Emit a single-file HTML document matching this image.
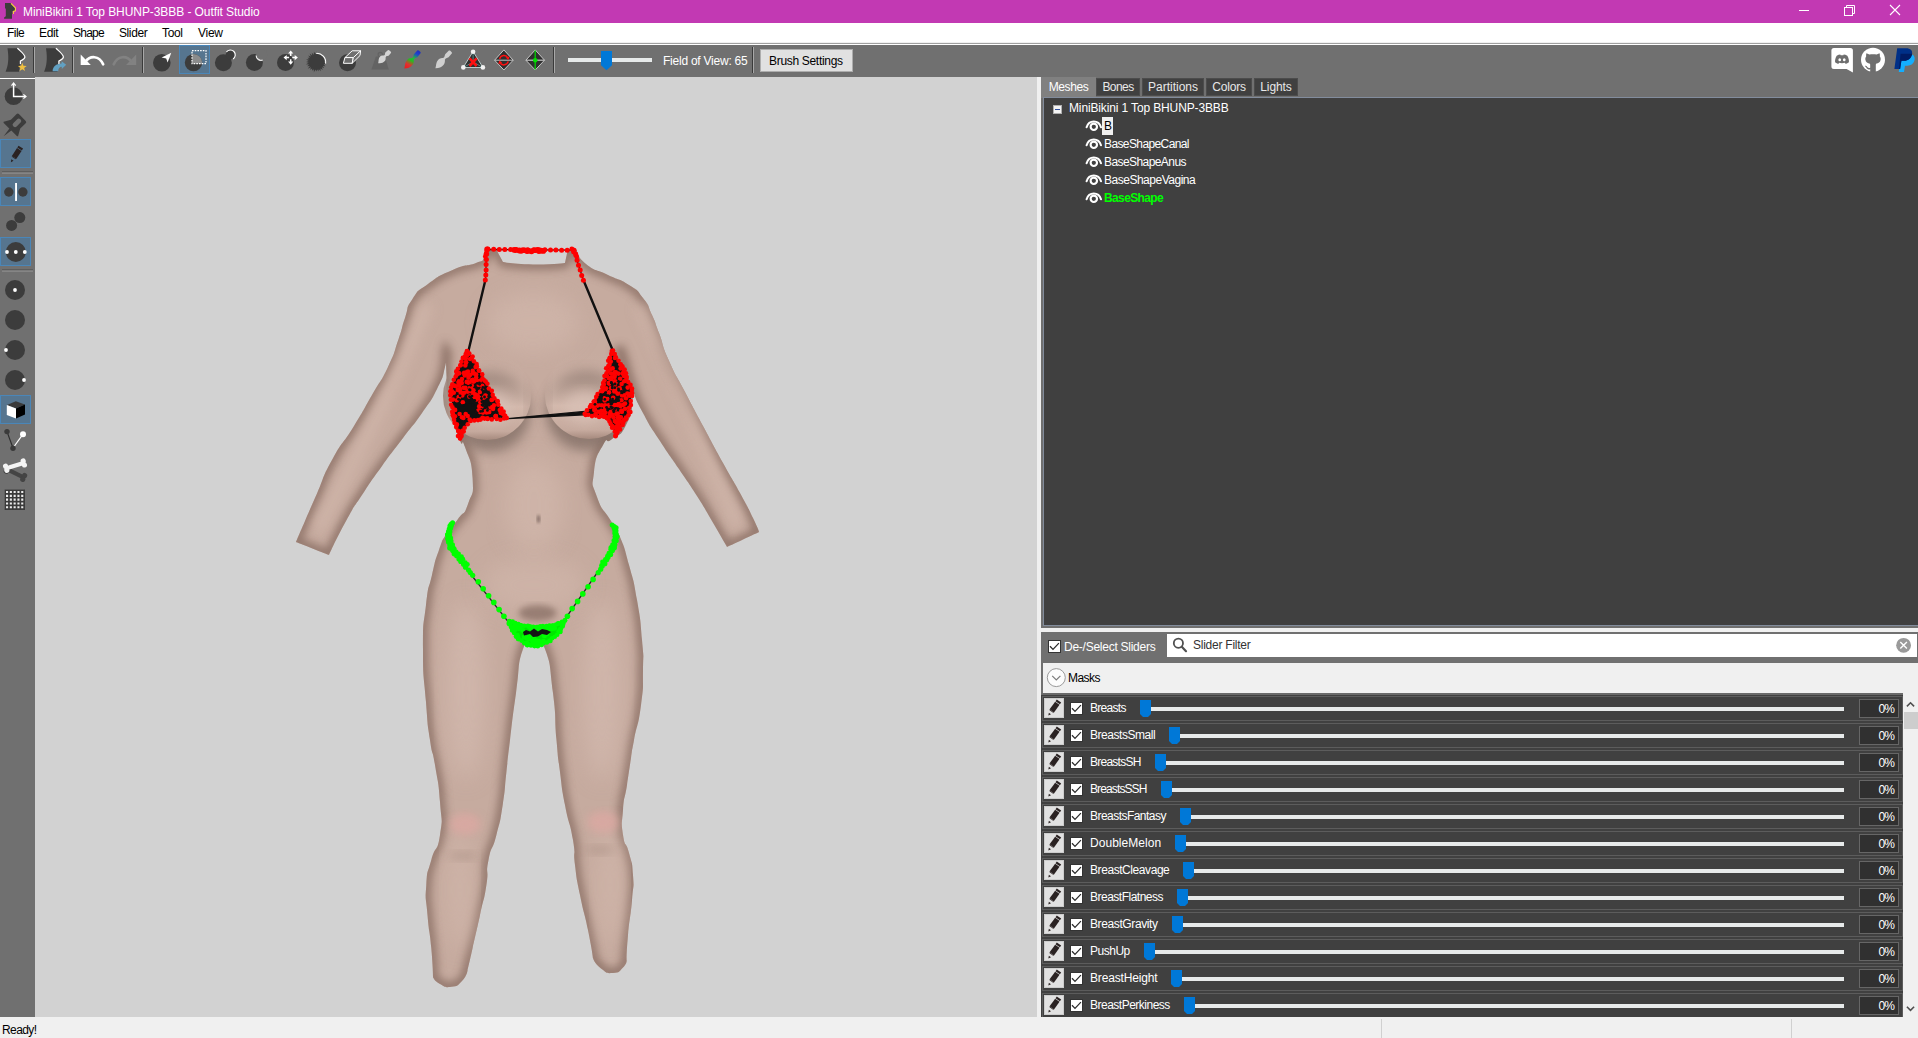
<!DOCTYPE html>
<html lang="en"><head><meta charset="utf-8"><title>MiniBikini 1 Top BHUNP-3BBB - Outfit Studio</title>
<style>
*{box-sizing:border-box;margin:0;padding:0}
html,body{width:1918px;height:1038px;overflow:hidden;background:#f0f0f0}
body{font-family:"Liberation Sans", sans-serif;font-size:12px;color:#000;position:relative;-webkit-font-smoothing:antialiased}
.abs{position:absolute}
.t{position:absolute;white-space:nowrap;line-height:16px;height:16px}
svg{position:absolute;overflow:visible}
#title{left:0;top:0;width:1918px;height:23px;background:#c239b3}
#menu{left:0;top:23px;width:1918px;height:19px;background:#fff}
#menuline{left:0;top:42px;width:1918px;height:3px;background:linear-gradient(#f0f0f0 0,#f0f0f0 33%,#a0a0a0 33%,#a0a0a0 66%,#fff 66%)}
#tool{left:0;top:45px;width:1918px;height:32px;background:#707070}
#left{left:0;top:77px;width:35px;height:940px;background:#707070}
#view{left:35px;top:77px;width:1002px;height:940px;background:#d2d2d2}
#sash{left:1037px;top:77px;width:4px;height:940px;background:#f0f0f0}
#rp{left:1041px;top:77px;width:877px;height:940px;background:#707070}
#status{left:0;top:1017px;width:1918px;height:21px;background:#f0f0f0}
.sel{position:absolute;background:#56758f;border:1px solid #4a86b8}
.vsep{position:absolute;width:2px;background:linear-gradient(90deg,#3c3c3c 50%,#a8a8a8 50%)}
.hsep{position:absolute;height:2px;background:linear-gradient(#505050 50%,#a0a0a0 50%)}
.tab{position:absolute;top:78px;height:18px;background:#404040;color:#e8e8e8;text-align:center;line-height:17px;border:1px solid #4c4c4c}
.tab.on{top:77px;height:21px;background:#808080;color:#fff;border:0;line-height:21px}
.row{position:absolute;left:1042px;width:861px;height:25px;border:1px solid #5c5c5c;background:#404040}
.eb{position:absolute;left:1044px;width:20px;height:20px;background:#e1e1e1;border:1px solid #cdcdcd}
.cb{position:absolute;width:13px;height:13px;background:#fff;border:1px solid #333}
.trk{position:absolute;height:4px;background:#e7eaea}
.val{position:absolute;left:1859px;width:40px;height:19px;background:#303030;border:1px solid #666;color:#fff;text-align:right;padding-right:4px;line-height:19px}
</style></head>
<body>
<div id="title" class="abs"></div>
<div id="menu" class="abs"></div><div id="menuline" class="abs"></div>
<div id="tool" class="abs"></div>
<div id="view" class="abs"></div>
<div id="left" class="abs"></div>
<div id="sash" class="abs"></div>
<div id="rp" class="abs"></div>
<svg style="left:3px;top:1px" width="16" height="20" viewBox="3 1 16 20" ><path d="M5 3 H10.9 L15 7.4 V11 H12.6 V14 H12 V18.8 H4.1 V17.6 L5.8 16.2 V8.6 H5 Z" fill="#3c3c3c"/><path d="M11 3.3 L15.4 7.8 V10.8 L13.4 11.4 V13.9" fill="none" stroke="#f8d040" stroke-width="1.1"/></svg>
<div class="t" style="left:23px;top:4px;color:#fff;letter-spacing:-0.076px;">MiniBikini 1 Top BHUNP-3BBB - Outfit Studio</div>
<svg style="left:1790px;top:0px" width="128" height="23" viewBox="1790 0 128 23" ><path d="M1799 10.5 H1809" stroke="#fff" stroke-width="1"/><rect x="1844.5" y="7.5" width="8" height="8" fill="none" stroke="#fff" stroke-width="1"/><path d="M1846.5 7.5 V5.5 H1854.5 V13.5 H1852.5" fill="none" stroke="#fff" stroke-width="1"/><path d="M1890 5 L1900 15 M1900 5 L1890 15" stroke="#fff" stroke-width="1.1"/></svg>
<div class="t" style="left:7px;top:25px;letter-spacing:-0.548px;">File</div>
<div class="t" style="left:39px;top:25px;letter-spacing:-0.329px;">Edit</div>
<div class="t" style="left:73px;top:25px;letter-spacing:-0.751px;">Shape</div>
<div class="t" style="left:119px;top:25px;letter-spacing:-0.398px;">Slider</div>
<div class="t" style="left:162px;top:25px;letter-spacing:-0.339px;">Tool</div>
<div class="t" style="left:198px;top:25px;letter-spacing:-0.266px;">View</div>
<svg style="left:0px;top:45px" width="760" height="32" viewBox="0 45 760 32" ><path transform="translate(0 0)" d="M7.5 48.2 L17.4 48.2 C19.5 50.5 24.9 54 24.9 57.1 C24.9 59.5 21.5 60.2 20.2 61 L20.2 64.5 L19 71.7 L5.6 71.7 C8 66 9.2 59 7.5 48.2 Z" fill="#3c3c3c"/><path transform="translate(0 0)" d="M17.4 48.2 C19.5 50.5 24.9 54 24.9 57.1 C24.9 59.5 21.5 60.2 20.4 61 L20.4 64" fill="none" stroke="#fff" stroke-width="1.2"/><polygon points="22.30,62.80 23.44,65.84 26.67,65.98 24.14,68.00 25.00,71.12 22.30,69.33 19.60,71.12 20.46,68.00 17.93,65.98 21.16,65.84" fill="#f0c040"/><rect x="33" y="47" width="1" height="26" fill="#3a3a3a"/><rect x="34" y="47" width="1" height="26" fill="#a8a8a8"/><path transform="translate(38.5 0)" d="M7.5 48.2 L17.4 48.2 C19.5 50.5 24.9 54 24.9 57.1 C24.9 59.5 21.5 60.2 20.2 61 L20.2 64.5 L19 71.7 L5.6 71.7 C8 66 9.2 59 7.5 48.2 Z" fill="#3c3c3c"/><path transform="translate(38.5 0)" d="M17.4 48.2 C19.5 50.5 24.9 54 24.9 57.1 C24.9 59.5 21.5 60.2 20.4 61 L20.4 64" fill="none" stroke="#fff" stroke-width="1.2"/><path d="M52.6 71.2 C52.8 66.5 56 63.6 61.6 63.4 L61.6 61.2 L66.2 64.8 L61.8 69 L61.8 66.8 C59.5 66.9 58.3 68.5 58.2 71.2 Z" fill="#62a1c3"/><rect x="72" y="47" width="1" height="26" fill="#3a3a3a"/><rect x="73" y="47" width="1" height="26" fill="#a8a8a8"/><path d="M80.7 54.6 L80.7 64.9 L90.8 64.9 Z" fill="#fff"/><path d="M85.5 61.5 C90 55.5 99 55 103.2 64.4" fill="none" stroke="#fff" stroke-width="2.6" stroke-linecap="round"/><path d="M136.2 54.6 L136.2 64.9 L126.1 64.9 Z" fill="#828282"/><path d="M131.4 61.5 C126.9 55.5 117.9 55 113.7 64.4" fill="none" stroke="#828282" stroke-width="2.6" stroke-linecap="round"/><rect x="142" y="47" width="1" height="26" fill="#3a3a3a"/><rect x="143" y="47" width="1" height="26" fill="#a8a8a8"/><circle cx="161.8" cy="62.8" r="8.8" fill="#3c3c3c"/><path d="M171.3 52.8 L161.6 57.6 L166.2 58.6 L167.6 62.6 Z" fill="#fff"/><rect x="179.5" y="45.5" width="30" height="28" fill="#56758f" stroke="#4a86b8" stroke-width="1"/><circle cx="193.5" cy="62.6" r="8.7" fill="#3c3c3c"/><defs><clipPath id="mk"><circle cx="193.5" cy="62.6" r="8.7"/></clipPath></defs><rect x="192" y="50.7" width="14" height="13" fill="#8c8c8c" clip-path="url(#mk)"/><rect x="192" y="50.7" width="14" height="13" fill="none" stroke="#fff" stroke-width="1.2" stroke-dasharray="1.6 1.1"/><circle cx="223.4" cy="62.8" r="8.5" fill="#3c3c3c"/><circle cx="230.2" cy="54.9" r="4.6" fill="#3c3c3c"/><path d="M226.4 52 A4.9 4.9 0 1 1 233 59" fill="none" stroke="#fff" stroke-width="1.1"/><circle cx="254.4" cy="62.4" r="8.5" fill="#3c3c3c"/><circle cx="261.8" cy="54.6" r="5.6" fill="#707070"/><path d="M256.2 55.6 A5.6 5.6 0 0 0 262.6 60.2 A4.6 4.6 0 0 1 256.2 55.6 Z" fill="#fff" stroke="#fff" stroke-width="0.7"/><circle cx="285.5" cy="62.6" r="8.5" fill="#3c3c3c"/><path d="M285.3 57.6 H289.09999999999997 M292.3 57.6 H296.09999999999997 M290.7 52.2 V56.0 M290.7 59.2 V63.0" stroke="#fff" stroke-width="1.5"/><path d="M290.7 50.4 l-2.6 3.2 h5.2 Z M290.7 64.8 l-2.6 -3.2 h5.2 Z M283.5 57.6 l3.2 -2.6 v5.2 Z M297.9 57.6 l-3.2 -2.6 v5.2 Z" fill="#fff"/><polygon points="324.60,61.90 324.55,62.83 325.96,64.11 323.57,64.44 325.59,66.37 322.82,66.00 324.18,68.19 321.74,67.34 322.78,70.02 320.40,68.42 320.82,71.28 318.84,69.17 318.46,71.34 317.16,69.55 316.30,71.52 315.44,69.55 313.92,72.32 313.76,69.17 311.99,70.85 312.20,68.42 310.12,69.64 310.86,67.34 307.78,68.69 309.78,66.00 307.10,66.33 309.03,64.44 305.88,64.28 308.65,62.76 306.08,61.90 308.65,61.04 306.13,59.58 309.03,59.36 307.47,57.65 309.78,57.80 308.15,55.40 310.86,56.46 309.61,53.51 312.20,55.38 311.84,52.64 313.76,54.63 313.95,51.60 315.44,54.25 316.30,51.43 317.23,53.65 318.15,53.81 319.04,54.07 319.90,54.42 320.72,54.87 321.47,55.41 322.17,56.03 322.79,56.73 323.33,57.48 323.78,58.30 324.13,59.16 324.39,60.05 324.55,60.97" fill="#3c3c3c"/><path d="M316 53.3 A9 9 0 0 1 325.6 63.6" fill="none" stroke="#fff" stroke-width="1.1"/><circle cx="347.5" cy="62.8" r="8.5" fill="#3c3c3c"/><path d="M352.2 50.8 L360.6 50.8 L353.3 57.6 L344.9 57.6 Z" fill="#707070" stroke="#fff" stroke-width="1" stroke-linejoin="round"/><path d="M344.9 57.6 L353.3 57.6 L352.2 63.3 L343.4 63.3 Z" fill="#6c6c6c" stroke="#fff" stroke-width="1" stroke-linejoin="round"/><path d="M360.6 50.8 L360 55.5 L352.2 63.3 L353.3 57.6 Z" fill="#707070" stroke="#fff" stroke-width="1" stroke-linejoin="round"/><circle cx="380.3" cy="54.6" r="2.2" fill="none" stroke="#636363" stroke-width="1.2"/><path d="M375.8 56.6 H384.8 L388.8 69.6 H371.4 Z" fill="#636363"/><path d="M378.20 63.20 C378.79 60.93 378.19 58.47 380.08 56.51 C381.26 55.29 383.15 55.71 383.95 55.53 L384.80 54.94 L385.28 52.57 L388.14 49.91 L389.14 50.17 L390.86 51.83 L391.16 52.83 L388.59 55.77 L386.23 56.33 L385.67 57.20 C385.52 58.00 386.00 59.88 384.82 61.10 C382.93 63.05 381.04 63.59 378.20 63.20 Z" fill="#d4d4d4"/><defs><linearGradient id="gcb" gradientUnits="userSpaceOnUse" x1="408" y1="69" x2="418" y2="51"><stop offset="0" stop-color="#e82020"/><stop offset="0.2" stop-color="#e03030"/><stop offset="0.45" stop-color="#20c020"/><stop offset="0.6" stop-color="#20b840"/><stop offset="0.85" stop-color="#2040d0"/><stop offset="1" stop-color="#2030c0"/></linearGradient></defs><path d="M404.30 68.60 C405.16 65.66 404.58 62.68 407.03 59.89 C408.56 58.15 410.87 58.33 411.97 58.06 L413.04 57.15 L413.89 54.21 L417.56 50.34 L418.70 50.41 L420.50 51.99 L420.72 53.11 L417.35 57.24 L414.54 58.47 L413.77 59.65 C413.65 60.77 414.12 63.04 412.59 64.78 C410.14 67.56 407.78 68.57 404.30 68.60 Z" fill="url(#gcb)"/><path d="M435.40 68.20 C436.31 65.31 435.78 62.33 438.26 59.64 C439.81 57.96 442.10 58.21 443.20 57.98 L444.28 57.11 L445.18 54.21 L448.89 50.48 L450.02 50.59 L451.78 52.21 L451.98 53.33 L448.56 57.33 L445.74 58.46 L444.96 59.61 C444.82 60.72 445.25 62.98 443.70 64.66 C441.22 67.35 438.85 68.28 435.40 68.20 Z" fill="#cfcfcf"/><path d="M473.1 51.5 L463.2 67.5 L483 67.5 Z" fill="#2e2e2e" stroke="#b8c8c8" stroke-width="1"/><path d="M473.1 51.5 L473.1 62 M463.2 67.5 L473.1 62 L483 67.5" stroke="#5a9a9a" stroke-width="0.8" fill="none"/><circle cx="473.1" cy="51.7" r="2.3" fill="#f2f2f2"/><circle cx="463.3" cy="67.4" r="2.3" fill="#f2f2f2"/><circle cx="482.9" cy="67.4" r="2.3" fill="#f2f2f2"/><path d="M469.5 58.4 L476.7 66 M476.7 58.4 L469.5 66" stroke="#ff1010" stroke-width="2.6"/><path d="M503.9 49.9 L513.2 60.2 L503.9 70 L494.6 60.2 Z" fill="#2e2e2e" stroke="#c4c4c4" stroke-width="1"/><path d="M494.6 60.2 H513.2" stroke="#c4c4c4" stroke-width="1"/><path d="M499.6 59 A4.5 4.5 0 0 1 508 58" fill="none" stroke="#ff1010" stroke-width="1.5"/><path d="M508.2 61.4 A4.5 4.5 0 0 1 499.8 62.4" fill="none" stroke="#ff1010" stroke-width="1.5"/><path d="M509.6 56.4 L508.4 60 L505.6 57.6 Z M498.2 64 L499.4 60.4 L502.2 62.8 Z" fill="#ff1010"/><path d="M535.2 49.9 L544.5 60.2 L535.2 70 L525.9 60.2 Z" fill="#2e2e2e" stroke="#c4c4c4" stroke-width="1"/><path d="M525.9 60.2 H544.5" stroke="#c4c4c4" stroke-width="1.2"/><path d="M535.2 50.5 V69.5" stroke="#00d000" stroke-width="1.3"/><circle cx="535.2" cy="60.2" r="2.2" fill="#00e000"/><rect x="553" y="47" width="1" height="26" fill="#3a3a3a"/><rect x="554" y="47" width="1" height="26" fill="#a8a8a8"/><rect x="568" y="58" width="84" height="4" fill="#e7eaea"/><path d="M601 51 H612 V65.2 L606.5 70.2 L601 65.2 Z" fill="#0078d7"/><rect x="752" y="47" width="1" height="26" fill="#3a3a3a"/><rect x="753" y="47" width="1" height="26" fill="#a8a8a8"/></svg>
<div class="t" style="left:663px;top:53px;color:#fff;letter-spacing:-0.237px;">Field of View: 65</div>
<div class="abs" style="left:760px;top:49px;width:93px;height:23px;background:#e1e1e1;border:1px solid #adadad"></div>
<div class="t" style="left:769px;top:53px;letter-spacing:-0.311px;">Brush Settings</div>
<svg style="left:1825px;top:45px" width="93" height="32" viewBox="1825 45 93 32" ><path d="M1833.9 47.9 H1850.4 A2.5 2.5 0 0 1 1852.9 50.4 V72.6 L1846.6 69 H1833.9 A2.5 2.5 0 0 1 1831.4 66.5 V50.4 A2.5 2.5 0 0 1 1833.9 47.9 Z" fill="#fff"/><g transform="translate(1842 59.2) scale(0.9) translate(-1842.1 -59)"><path d="M1836.2 55.2 C1837.6 54.3 1839 53.9 1840.2 53.8 L1840.6 54.6 H1843.6 L1844 53.8 C1845.2 53.9 1846.6 54.3 1848 55.2 C1849.4 57.6 1850 60 1849.8 62.4 C1848.6 63.4 1847.4 63.9 1846.2 64.2 L1845.4 62.9 C1843.4 63.6 1840.8 63.6 1838.8 62.9 L1838 64.2 C1836.8 63.9 1835.6 63.4 1834.4 62.4 C1834.2 60 1834.8 57.6 1836.2 55.2 Z" fill="#6e6e6e"/><ellipse cx="1839.6" cy="59.6" rx="1.5" ry="1.7" fill="#fff"/><ellipse cx="1844.6" cy="59.6" rx="1.5" ry="1.7" fill="#fff"/></g><circle cx="1873" cy="59.7" r="12" fill="#fff"/><path d="M1866.4 53.2 L1869.4 54.6 C1871.6 54 1874.4 54 1876.6 54.6 L1879.6 53.2 C1880 54.4 1880 55.4 1879.8 56.2 C1880.6 57.4 1880.8 58.6 1880.6 59.8 C1880.2 62.4 1878.4 63.4 1876 63.8 C1875.8 64.4 1875.8 65 1875.8 66 L1875.8 72.2 L1870.2 72.2 L1870.2 69.2 C1868 69.8 1866.9 68.8 1866.3 67.6 C1865.9 66.8 1865.4 66.3 1864.8 65.9 C1865.8 65.6 1866.7 66 1867.3 66.9 C1868 67.9 1869 68.2 1870.2 67.8 L1870.2 66 C1870.2 65 1870.2 64.4 1870 63.8 C1867.6 63.4 1865.8 62.4 1865.4 59.8 C1865.2 58.6 1865.4 57.4 1866.2 56.2 C1866 55.4 1866 54.4 1866.4 53.2 Z" fill="#6e6e6e"/><path d="M1900.6 53.8 H1908.8 C1912.8 53.8 1915.2 56 1914.6 59.6 C1913.9 63.8 1911 65.8 1907.2 65.8 H1905 L1904 71.9 H1898.8 Z" fill="#14aeff"/><path d="M1897.2 48.2 H1906.2 C1910.4 48.2 1912.6 50.4 1912.1 53.8 C1911.4 58.6 1908.2 60.8 1904 60.8 H1901.4 L1900.1 69 H1894.4 Z" fill="#003087"/><path d="M1900.6 53.8 H1908.8 C1910.4 53.8 1911.4 53.6 1912.1 53.8 C1911.4 58.6 1908.2 60.8 1904 60.8 H1901.4 L1900.1 69 H1898.9 Z" fill="#001c64"/></svg>
<svg style="left:0px;top:77px" width="35" height="440" viewBox="0 77 35 440" ><rect x="0" y="78" width="35" height="1" fill="#fff"/><circle cx="13.6" cy="96.2" r="8.9" fill="#3c3c3c"/><path d="M13.6 84 V96.5 H25.4" fill="none" stroke="#fff" stroke-width="1.5"/><path d="M11.5 85.6 L13.6 83 L15.7 85.6 M23.4 94.4 L26 96.5 L23.4 98.6" fill="none" stroke="#fff" stroke-width="1.2"/><g transform="translate(22.3 117.5) rotate(45)"><rect x="-6.4" y="0" width="12.8" height="13" rx="1.6" fill="#3c3c3c"/><path d="M-6.4 9.5 L-10.2 16.2 L-9.6 17 H9.6 L10.2 16.2 L6.4 9.5 Z" fill="#3c3c3c"/><path d="M-1.4 16.5 H1.4 L0 26.4 Z" fill="#3c3c3c"/><rect x="-2.4" y="2.6" width="4.8" height="10" rx="2.2" fill="#707070"/></g><rect x="0.5" y="139.5" width="30" height="28" fill="#56758f" stroke="#4a86b8" stroke-width="1"/><g transform="translate(16 154.5) scale(1.0) rotate(33)"><rect x="-2.7" y="-8.8" width="5.4" height="2.2" fill="#2a2222"/><rect x="-2.7" y="-6" width="5.4" height="9.4" fill="#2a2222"/><path d="M-2.7 3.4 H2.7 L2.2 4.2 H-2.2 Z" fill="#2a2222"/><path d="M-1.3 6.6 H1.3 L0 9.3 Z" fill="#2a2222"/></g><rect x="2" y="171.5" width="31" height="1" fill="#4a4a4a"/><rect x="2" y="172.5" width="31" height="1" fill="#9a9a9a"/><rect x="0.5" y="177.5" width="30" height="28" fill="#56758f" stroke="#4a86b8" stroke-width="1"/><circle cx="8.8" cy="192" r="4.7" fill="#3c3c3c"/><circle cx="22.9" cy="192" r="4.7" fill="#3c3c3c"/><rect x="15.1" y="183" width="1.9" height="18" fill="#fff"/><circle cx="11.6" cy="225.4" r="5.5" fill="#3c3c3c"/><circle cx="19.8" cy="217.6" r="5.5" fill="#3c3c3c"/><rect x="0.5" y="237.5" width="30" height="28" fill="#56758f" stroke="#4a86b8" stroke-width="1"/><circle cx="15.8" cy="252" r="10" fill="#3c3c3c"/><circle cx="7" cy="252" r="1.9" fill="#fff"/><circle cx="15.8" cy="252" r="1.9" fill="#fff"/><circle cx="24.8" cy="252" r="1.9" fill="#fff"/><rect x="2" y="269.5" width="31" height="1" fill="#4a4a4a"/><rect x="2" y="270.5" width="31" height="1" fill="#9a9a9a"/><circle cx="15" cy="290" r="10" fill="#3c3c3c"/><circle cx="15" cy="290" r="1.9" fill="#fff"/><circle cx="15" cy="320" r="10" fill="#3c3c3c"/><circle cx="15" cy="350" r="10" fill="#3c3c3c"/><circle cx="6" cy="350" r="1.9" fill="#fff"/><circle cx="15" cy="380" r="10" fill="#3c3c3c"/><circle cx="24" cy="380" r="1.9" fill="#fff"/><rect x="0.5" y="395.5" width="30" height="28" fill="#56758f" stroke="#4a86b8" stroke-width="1"/><path d="M15.8 401.2 L25 404.6 L16 408.4 L6.8 405 Z" fill="#3a3a3a"/><path d="M6.8 405 L16 408.4 L16 418.6 L6.8 415 Z" fill="#fff"/><path d="M16 408.4 L25 404.6 L25 414.4 L16 418.6 Z" fill="#000"/><path d="M7 431.6 L13 448" stroke="#2e2e2e" stroke-width="1.2"/><path d="M13 448 L23 434.2" stroke="#fff" stroke-width="1.2"/><circle cx="7" cy="431.6" r="2.7" fill="#3a3a3a"/><circle cx="13" cy="448.2" r="2.7" fill="#3a3a3a"/><circle cx="23" cy="434.2" r="3" fill="#fff"/><g transform="translate(15.4 473.4) rotate(26)" fill="#444"><rect x="-9.0" y="-2.1" width="18" height="4.2"/><circle cx="-9.2" cy="-2.1" r="2.6"/><circle cx="-9.2" cy="2.1" r="2.6"/><circle cx="9.2" cy="-2.1" r="2.6"/><circle cx="9.2" cy="2.1" r="2.6"/></g><g transform="translate(15 465.6) rotate(-17)" fill="#f4f4f4"><rect x="-9.0" y="-2.1" width="18" height="4.2"/><circle cx="-9.2" cy="-2.1" r="2.6"/><circle cx="-9.2" cy="2.1" r="2.6"/><circle cx="9.2" cy="-2.1" r="2.6"/><circle cx="9.2" cy="2.1" r="2.6"/></g><rect x="4.4" y="489.4" width="20.4" height="20.4" fill="#ececec"/><path d="M5.15 489.3 V510 M4.3 490.15 H25 M8.95 489.3 V510 M4.3 493.95 H25 M12.75 489.3 V510 M4.3 497.75 H25 M16.55 489.3 V510 M4.3 501.55 H25 M20.35 489.3 V510 M4.3 505.35 H25 M24.15 489.3 V510 M4.3 509.15 H25 " stroke="#3a3a3a" stroke-width="1.7"/></svg>
<svg style="left:35px;top:77px" width="1002" height="940" viewBox="35 77 1002 940" ><defs><clipPath id="bc"><path d="M485.0 250.0 C485.0 250.0 496.0 249.0 496.0 249.0 C496.0 249.0 503.0 262.0 503.0 262.0 C503.0 262.0 512.3 264.2 533.0 264.5 C553.7 264.8 565.0 263.0 565.0 263.0 C565.0 263.0 568.0 249.0 568.0 249.0 C568.0 249.0 577.0 250.0 577.0 250.0 C577.0 250.0 575.7 255.7 586.0 264.0 C596.3 272.3 593.7 268.0 608.0 275.0 C622.3 282.0 617.3 277.3 629.0 285.0 C640.7 292.7 635.3 288.0 643.0 298.0 C650.7 308.0 646.7 303.3 652.0 315.0 C657.3 326.7 653.3 317.7 659.0 333.0 C664.7 348.3 660.3 341.3 669.0 361.0 C677.7 380.7 673.7 370.3 685.0 392.0 C696.3 413.7 690.3 402.3 703.0 426.0 C715.7 449.7 710.7 440.7 723.0 463.0 C735.3 485.3 730.0 474.7 740.0 493.0 C750.0 511.3 746.7 505.0 753.0 518.0 C759.3 531.0 759.0 532.0 759.0 532.0 C759.0 532.0 727.0 547.0 727.0 547.0 C727.0 547.0 722.0 538.0 712.0 521.0 C702.0 504.0 708.0 513.3 697.0 496.0 C686.0 478.7 691.3 487.3 679.0 469.0 C666.7 450.7 672.0 459.7 660.0 441.0 C648.0 422.3 652.7 431.3 643.0 413.0 C633.3 394.7 637.7 402.3 631.0 386.0 C624.3 369.7 627.0 377.0 623.0 364.0 C619.0 351.0 619.0 347.0 619.0 347.0 C619.0 347.0 622.7 355.0 627.0 372.0 C631.3 389.0 632.3 380.3 632.0 398.0 C631.7 415.7 632.7 411.3 626.0 425.0 C619.3 438.7 619.7 432.3 612.0 439.0 C604.3 445.7 609.0 434.0 603.0 445.0 C597.0 456.0 596.0 454.7 594.0 472.0 C592.0 489.3 591.3 480.7 597.0 497.0 C602.7 513.3 603.3 507.7 611.0 521.0 C618.7 534.3 614.0 522.3 620.0 537.0 C626.0 551.7 623.3 544.0 629.0 565.0 C634.7 586.0 632.7 575.0 637.0 600.0 C641.3 625.0 640.0 616.7 642.0 640.0 C644.0 663.3 643.3 648.3 643.0 670.0 C642.7 691.7 644.0 681.7 641.0 705.0 C638.0 728.3 637.3 722.3 634.0 740.0 C630.7 757.7 633.3 743.0 631.0 758.0 C628.7 773.0 629.7 767.7 627.0 785.0 C624.3 802.3 624.3 793.3 623.0 810.0 C621.7 826.7 621.0 820.7 623.0 835.0 C625.0 849.3 625.7 839.7 629.0 853.0 C632.3 866.3 632.0 859.3 633.0 875.0 C634.0 890.7 633.7 880.0 632.0 900.0 C630.3 920.0 629.8 915.0 628.0 935.0 C626.2 955.0 626.6 960.0 626.6 960.0 C626.6 960.0 627.5 963.2 623.0 967.5 C618.5 971.8 620.3 972.7 613.0 973.0 C605.7 973.3 607.7 973.5 601.0 968.5 C594.3 963.5 593.0 958.0 593.0 958.0 C593.0 958.0 592.3 951.0 588.0 930.0 C583.7 909.0 584.3 916.7 580.0 895.0 C575.7 873.3 577.3 883.3 575.0 865.0 C572.7 846.7 576.3 860.0 573.0 840.0 C569.7 820.0 569.3 827.7 565.0 805.0 C560.7 782.3 562.8 793.7 560.0 772.0 C557.2 750.3 558.8 766.3 556.5 740.0 C554.2 713.7 556.8 723.3 553.0 693.0 C549.2 662.7 551.3 666.3 545.0 649.0 C538.7 631.7 534.0 641.0 534.0 641.0 C534.0 641.0 529.0 631.7 523.0 649.0 C517.0 666.3 520.3 662.7 516.0 693.0 C511.7 723.3 513.2 713.7 510.0 740.0 C506.8 766.3 508.8 750.3 506.4 772.0 C504.0 793.7 506.0 784.0 502.7 805.0 C499.4 826.0 501.1 816.7 496.4 835.0 C491.7 853.3 491.8 843.3 488.5 860.0 C485.2 876.7 489.2 866.7 486.4 885.0 C483.6 903.3 484.6 894.0 480.0 915.0 C475.4 936.0 476.7 929.7 472.6 948.0 C468.5 966.3 467.6 970.0 467.6 970.0 C467.6 970.0 467.4 975.4 462.0 981.0 C456.6 986.6 458.6 985.7 451.3 986.7 C444.0 987.7 446.1 987.2 440.0 984.0 C433.9 980.8 433.0 977.0 433.0 977.0 C433.0 977.0 433.1 968.7 431.3 948.0 C429.5 927.3 429.2 936.0 427.5 915.0 C425.8 894.0 425.0 903.3 426.3 885.0 C427.6 866.7 426.7 876.7 431.3 860.0 C435.9 843.3 437.1 854.3 440.0 835.0 C442.9 815.7 441.7 825.3 440.0 802.0 C438.3 778.7 438.3 785.7 435.0 765.0 C431.7 744.3 433.0 761.0 430.0 740.0 C427.0 719.0 428.3 732.0 426.0 702.0 C423.7 672.0 423.0 682.3 423.0 650.0 C423.0 617.7 423.0 630.0 426.0 605.0 C429.0 580.0 427.7 593.3 432.0 575.0 C436.3 556.7 434.0 564.0 439.0 550.0 C444.0 536.0 440.7 543.3 447.0 533.0 C453.3 522.7 451.0 528.7 458.0 519.0 C465.0 509.3 463.1 517.7 468.0 504.0 C472.9 490.3 473.6 497.0 472.6 478.0 C471.6 459.0 469.5 460.3 465.0 447.0 C460.5 433.7 464.3 452.3 459.0 438.0 C453.7 423.7 453.2 425.7 449.0 404.0 C444.8 382.3 447.3 390.3 446.4 373.0 C445.5 355.7 446.4 352.0 446.4 352.0 C446.4 352.0 448.1 354.7 445.0 367.0 C441.9 379.3 444.7 373.7 437.0 389.0 C429.3 404.3 433.3 396.7 422.0 413.0 C410.7 429.3 416.3 420.3 403.0 438.0 C389.7 455.7 395.3 447.5 382.0 466.0 C368.7 484.5 375.0 475.2 363.0 493.5 C351.0 511.8 357.3 500.5 346.0 521.0 C334.7 541.5 329.0 555.0 329.0 555.0 C329.0 555.0 296.0 542.0 296.0 542.0 C296.0 542.0 298.0 537.2 305.0 521.0 C312.0 504.8 308.0 513.8 317.0 493.5 C326.0 473.2 319.7 482.5 332.0 460.0 C344.3 437.5 340.7 447.7 354.0 426.0 C367.3 404.3 360.7 414.7 372.0 395.0 C383.3 375.3 379.1 385.7 388.0 367.0 C396.9 348.3 392.9 355.3 398.6 339.0 C404.3 322.7 400.4 331.3 405.0 318.0 C409.6 304.7 404.8 310.3 412.5 299.0 C420.2 287.7 414.6 293.7 428.0 284.0 C441.4 274.3 436.6 277.0 452.6 270.0 C468.6 263.0 465.5 267.0 476.0 263.0 C486.5 259.0 481.0 262.3 484.0 258.0 C487.0 253.7 485.0 250.0 485.0 250.0 Z"/></clipPath><filter id="b6" x="-20%" y="-20%" width="140%" height="140%"><feGaussianBlur stdDeviation="6"/></filter><filter id="b12" x="-30%" y="-30%" width="160%" height="160%"><feGaussianBlur stdDeviation="11"/></filter><filter id="b4" x="-20%" y="-20%" width="140%" height="140%"><feGaussianBlur stdDeviation="4"/></filter><filter id="b3" x="-20%" y="-20%" width="140%" height="140%"><feGaussianBlur stdDeviation="3"/></filter><filter id="b2" x="-20%" y="-20%" width="140%" height="140%"><feGaussianBlur stdDeviation="1.6"/></filter><linearGradient id="cf" x1="0" y1="0" x2="0" y2="1"><stop offset="0" stop-color="#c9afa3" stop-opacity="0"/><stop offset="0.3" stop-color="#ccb2a6" stop-opacity="0.35"/><stop offset="0.62" stop-color="#d3b9ad" stop-opacity="1"/><stop offset="0.9" stop-color="#c6aa9e" stop-opacity="1"/><stop offset="1" stop-color="#a68a7e" stop-opacity="1"/></linearGradient><clipPath id="cl"><circle cx="487" cy="396" r="44"/></clipPath><clipPath id="cr"><circle cx="589" cy="395" r="44"/></clipPath></defs><path d="M485.0 250.0 C485.0 250.0 496.0 249.0 496.0 249.0 C496.0 249.0 503.0 262.0 503.0 262.0 C503.0 262.0 512.3 264.2 533.0 264.5 C553.7 264.8 565.0 263.0 565.0 263.0 C565.0 263.0 568.0 249.0 568.0 249.0 C568.0 249.0 577.0 250.0 577.0 250.0 C577.0 250.0 575.7 255.7 586.0 264.0 C596.3 272.3 593.7 268.0 608.0 275.0 C622.3 282.0 617.3 277.3 629.0 285.0 C640.7 292.7 635.3 288.0 643.0 298.0 C650.7 308.0 646.7 303.3 652.0 315.0 C657.3 326.7 653.3 317.7 659.0 333.0 C664.7 348.3 660.3 341.3 669.0 361.0 C677.7 380.7 673.7 370.3 685.0 392.0 C696.3 413.7 690.3 402.3 703.0 426.0 C715.7 449.7 710.7 440.7 723.0 463.0 C735.3 485.3 730.0 474.7 740.0 493.0 C750.0 511.3 746.7 505.0 753.0 518.0 C759.3 531.0 759.0 532.0 759.0 532.0 C759.0 532.0 727.0 547.0 727.0 547.0 C727.0 547.0 722.0 538.0 712.0 521.0 C702.0 504.0 708.0 513.3 697.0 496.0 C686.0 478.7 691.3 487.3 679.0 469.0 C666.7 450.7 672.0 459.7 660.0 441.0 C648.0 422.3 652.7 431.3 643.0 413.0 C633.3 394.7 637.7 402.3 631.0 386.0 C624.3 369.7 627.0 377.0 623.0 364.0 C619.0 351.0 619.0 347.0 619.0 347.0 C619.0 347.0 622.7 355.0 627.0 372.0 C631.3 389.0 632.3 380.3 632.0 398.0 C631.7 415.7 632.7 411.3 626.0 425.0 C619.3 438.7 619.7 432.3 612.0 439.0 C604.3 445.7 609.0 434.0 603.0 445.0 C597.0 456.0 596.0 454.7 594.0 472.0 C592.0 489.3 591.3 480.7 597.0 497.0 C602.7 513.3 603.3 507.7 611.0 521.0 C618.7 534.3 614.0 522.3 620.0 537.0 C626.0 551.7 623.3 544.0 629.0 565.0 C634.7 586.0 632.7 575.0 637.0 600.0 C641.3 625.0 640.0 616.7 642.0 640.0 C644.0 663.3 643.3 648.3 643.0 670.0 C642.7 691.7 644.0 681.7 641.0 705.0 C638.0 728.3 637.3 722.3 634.0 740.0 C630.7 757.7 633.3 743.0 631.0 758.0 C628.7 773.0 629.7 767.7 627.0 785.0 C624.3 802.3 624.3 793.3 623.0 810.0 C621.7 826.7 621.0 820.7 623.0 835.0 C625.0 849.3 625.7 839.7 629.0 853.0 C632.3 866.3 632.0 859.3 633.0 875.0 C634.0 890.7 633.7 880.0 632.0 900.0 C630.3 920.0 629.8 915.0 628.0 935.0 C626.2 955.0 626.6 960.0 626.6 960.0 C626.6 960.0 627.5 963.2 623.0 967.5 C618.5 971.8 620.3 972.7 613.0 973.0 C605.7 973.3 607.7 973.5 601.0 968.5 C594.3 963.5 593.0 958.0 593.0 958.0 C593.0 958.0 592.3 951.0 588.0 930.0 C583.7 909.0 584.3 916.7 580.0 895.0 C575.7 873.3 577.3 883.3 575.0 865.0 C572.7 846.7 576.3 860.0 573.0 840.0 C569.7 820.0 569.3 827.7 565.0 805.0 C560.7 782.3 562.8 793.7 560.0 772.0 C557.2 750.3 558.8 766.3 556.5 740.0 C554.2 713.7 556.8 723.3 553.0 693.0 C549.2 662.7 551.3 666.3 545.0 649.0 C538.7 631.7 534.0 641.0 534.0 641.0 C534.0 641.0 529.0 631.7 523.0 649.0 C517.0 666.3 520.3 662.7 516.0 693.0 C511.7 723.3 513.2 713.7 510.0 740.0 C506.8 766.3 508.8 750.3 506.4 772.0 C504.0 793.7 506.0 784.0 502.7 805.0 C499.4 826.0 501.1 816.7 496.4 835.0 C491.7 853.3 491.8 843.3 488.5 860.0 C485.2 876.7 489.2 866.7 486.4 885.0 C483.6 903.3 484.6 894.0 480.0 915.0 C475.4 936.0 476.7 929.7 472.6 948.0 C468.5 966.3 467.6 970.0 467.6 970.0 C467.6 970.0 467.4 975.4 462.0 981.0 C456.6 986.6 458.6 985.7 451.3 986.7 C444.0 987.7 446.1 987.2 440.0 984.0 C433.9 980.8 433.0 977.0 433.0 977.0 C433.0 977.0 433.1 968.7 431.3 948.0 C429.5 927.3 429.2 936.0 427.5 915.0 C425.8 894.0 425.0 903.3 426.3 885.0 C427.6 866.7 426.7 876.7 431.3 860.0 C435.9 843.3 437.1 854.3 440.0 835.0 C442.9 815.7 441.7 825.3 440.0 802.0 C438.3 778.7 438.3 785.7 435.0 765.0 C431.7 744.3 433.0 761.0 430.0 740.0 C427.0 719.0 428.3 732.0 426.0 702.0 C423.7 672.0 423.0 682.3 423.0 650.0 C423.0 617.7 423.0 630.0 426.0 605.0 C429.0 580.0 427.7 593.3 432.0 575.0 C436.3 556.7 434.0 564.0 439.0 550.0 C444.0 536.0 440.7 543.3 447.0 533.0 C453.3 522.7 451.0 528.7 458.0 519.0 C465.0 509.3 463.1 517.7 468.0 504.0 C472.9 490.3 473.6 497.0 472.6 478.0 C471.6 459.0 469.5 460.3 465.0 447.0 C460.5 433.7 464.3 452.3 459.0 438.0 C453.7 423.7 453.2 425.7 449.0 404.0 C444.8 382.3 447.3 390.3 446.4 373.0 C445.5 355.7 446.4 352.0 446.4 352.0 C446.4 352.0 448.1 354.7 445.0 367.0 C441.9 379.3 444.7 373.7 437.0 389.0 C429.3 404.3 433.3 396.7 422.0 413.0 C410.7 429.3 416.3 420.3 403.0 438.0 C389.7 455.7 395.3 447.5 382.0 466.0 C368.7 484.5 375.0 475.2 363.0 493.5 C351.0 511.8 357.3 500.5 346.0 521.0 C334.7 541.5 329.0 555.0 329.0 555.0 C329.0 555.0 296.0 542.0 296.0 542.0 C296.0 542.0 298.0 537.2 305.0 521.0 C312.0 504.8 308.0 513.8 317.0 493.5 C326.0 473.2 319.7 482.5 332.0 460.0 C344.3 437.5 340.7 447.7 354.0 426.0 C367.3 404.3 360.7 414.7 372.0 395.0 C383.3 375.3 379.1 385.7 388.0 367.0 C396.9 348.3 392.9 355.3 398.6 339.0 C404.3 322.7 400.4 331.3 405.0 318.0 C409.6 304.7 404.8 310.3 412.5 299.0 C420.2 287.7 414.6 293.7 428.0 284.0 C441.4 274.3 436.6 277.0 452.6 270.0 C468.6 263.0 465.5 267.0 476.0 263.0 C486.5 259.0 481.0 262.3 484.0 258.0 C487.0 253.7 485.0 250.0 485.0 250.0 Z" fill="#c6ab9f"/><g clip-path="url(#bc)"><path d="M485.0 250.0 C485.0 250.0 496.0 249.0 496.0 249.0 C496.0 249.0 503.0 262.0 503.0 262.0 C503.0 262.0 512.3 264.2 533.0 264.5 C553.7 264.8 565.0 263.0 565.0 263.0 C565.0 263.0 568.0 249.0 568.0 249.0 C568.0 249.0 577.0 250.0 577.0 250.0 C577.0 250.0 575.7 255.7 586.0 264.0 C596.3 272.3 593.7 268.0 608.0 275.0 C622.3 282.0 617.3 277.3 629.0 285.0 C640.7 292.7 635.3 288.0 643.0 298.0 C650.7 308.0 646.7 303.3 652.0 315.0 C657.3 326.7 653.3 317.7 659.0 333.0 C664.7 348.3 660.3 341.3 669.0 361.0 C677.7 380.7 673.7 370.3 685.0 392.0 C696.3 413.7 690.3 402.3 703.0 426.0 C715.7 449.7 710.7 440.7 723.0 463.0 C735.3 485.3 730.0 474.7 740.0 493.0 C750.0 511.3 746.7 505.0 753.0 518.0 C759.3 531.0 759.0 532.0 759.0 532.0 C759.0 532.0 727.0 547.0 727.0 547.0 C727.0 547.0 722.0 538.0 712.0 521.0 C702.0 504.0 708.0 513.3 697.0 496.0 C686.0 478.7 691.3 487.3 679.0 469.0 C666.7 450.7 672.0 459.7 660.0 441.0 C648.0 422.3 652.7 431.3 643.0 413.0 C633.3 394.7 637.7 402.3 631.0 386.0 C624.3 369.7 627.0 377.0 623.0 364.0 C619.0 351.0 619.0 347.0 619.0 347.0 C619.0 347.0 622.7 355.0 627.0 372.0 C631.3 389.0 632.3 380.3 632.0 398.0 C631.7 415.7 632.7 411.3 626.0 425.0 C619.3 438.7 619.7 432.3 612.0 439.0 C604.3 445.7 609.0 434.0 603.0 445.0 C597.0 456.0 596.0 454.7 594.0 472.0 C592.0 489.3 591.3 480.7 597.0 497.0 C602.7 513.3 603.3 507.7 611.0 521.0 C618.7 534.3 614.0 522.3 620.0 537.0 C626.0 551.7 623.3 544.0 629.0 565.0 C634.7 586.0 632.7 575.0 637.0 600.0 C641.3 625.0 640.0 616.7 642.0 640.0 C644.0 663.3 643.3 648.3 643.0 670.0 C642.7 691.7 644.0 681.7 641.0 705.0 C638.0 728.3 637.3 722.3 634.0 740.0 C630.7 757.7 633.3 743.0 631.0 758.0 C628.7 773.0 629.7 767.7 627.0 785.0 C624.3 802.3 624.3 793.3 623.0 810.0 C621.7 826.7 621.0 820.7 623.0 835.0 C625.0 849.3 625.7 839.7 629.0 853.0 C632.3 866.3 632.0 859.3 633.0 875.0 C634.0 890.7 633.7 880.0 632.0 900.0 C630.3 920.0 629.8 915.0 628.0 935.0 C626.2 955.0 626.6 960.0 626.6 960.0 C626.6 960.0 627.5 963.2 623.0 967.5 C618.5 971.8 620.3 972.7 613.0 973.0 C605.7 973.3 607.7 973.5 601.0 968.5 C594.3 963.5 593.0 958.0 593.0 958.0 C593.0 958.0 592.3 951.0 588.0 930.0 C583.7 909.0 584.3 916.7 580.0 895.0 C575.7 873.3 577.3 883.3 575.0 865.0 C572.7 846.7 576.3 860.0 573.0 840.0 C569.7 820.0 569.3 827.7 565.0 805.0 C560.7 782.3 562.8 793.7 560.0 772.0 C557.2 750.3 558.8 766.3 556.5 740.0 C554.2 713.7 556.8 723.3 553.0 693.0 C549.2 662.7 551.3 666.3 545.0 649.0 C538.7 631.7 534.0 641.0 534.0 641.0 C534.0 641.0 529.0 631.7 523.0 649.0 C517.0 666.3 520.3 662.7 516.0 693.0 C511.7 723.3 513.2 713.7 510.0 740.0 C506.8 766.3 508.8 750.3 506.4 772.0 C504.0 793.7 506.0 784.0 502.7 805.0 C499.4 826.0 501.1 816.7 496.4 835.0 C491.7 853.3 491.8 843.3 488.5 860.0 C485.2 876.7 489.2 866.7 486.4 885.0 C483.6 903.3 484.6 894.0 480.0 915.0 C475.4 936.0 476.7 929.7 472.6 948.0 C468.5 966.3 467.6 970.0 467.6 970.0 C467.6 970.0 467.4 975.4 462.0 981.0 C456.6 986.6 458.6 985.7 451.3 986.7 C444.0 987.7 446.1 987.2 440.0 984.0 C433.9 980.8 433.0 977.0 433.0 977.0 C433.0 977.0 433.1 968.7 431.3 948.0 C429.5 927.3 429.2 936.0 427.5 915.0 C425.8 894.0 425.0 903.3 426.3 885.0 C427.6 866.7 426.7 876.7 431.3 860.0 C435.9 843.3 437.1 854.3 440.0 835.0 C442.9 815.7 441.7 825.3 440.0 802.0 C438.3 778.7 438.3 785.7 435.0 765.0 C431.7 744.3 433.0 761.0 430.0 740.0 C427.0 719.0 428.3 732.0 426.0 702.0 C423.7 672.0 423.0 682.3 423.0 650.0 C423.0 617.7 423.0 630.0 426.0 605.0 C429.0 580.0 427.7 593.3 432.0 575.0 C436.3 556.7 434.0 564.0 439.0 550.0 C444.0 536.0 440.7 543.3 447.0 533.0 C453.3 522.7 451.0 528.7 458.0 519.0 C465.0 509.3 463.1 517.7 468.0 504.0 C472.9 490.3 473.6 497.0 472.6 478.0 C471.6 459.0 469.5 460.3 465.0 447.0 C460.5 433.7 464.3 452.3 459.0 438.0 C453.7 423.7 453.2 425.7 449.0 404.0 C444.8 382.3 447.3 390.3 446.4 373.0 C445.5 355.7 446.4 352.0 446.4 352.0 C446.4 352.0 448.1 354.7 445.0 367.0 C441.9 379.3 444.7 373.7 437.0 389.0 C429.3 404.3 433.3 396.7 422.0 413.0 C410.7 429.3 416.3 420.3 403.0 438.0 C389.7 455.7 395.3 447.5 382.0 466.0 C368.7 484.5 375.0 475.2 363.0 493.5 C351.0 511.8 357.3 500.5 346.0 521.0 C334.7 541.5 329.0 555.0 329.0 555.0 C329.0 555.0 296.0 542.0 296.0 542.0 C296.0 542.0 298.0 537.2 305.0 521.0 C312.0 504.8 308.0 513.8 317.0 493.5 C326.0 473.2 319.7 482.5 332.0 460.0 C344.3 437.5 340.7 447.7 354.0 426.0 C367.3 404.3 360.7 414.7 372.0 395.0 C383.3 375.3 379.1 385.7 388.0 367.0 C396.9 348.3 392.9 355.3 398.6 339.0 C404.3 322.7 400.4 331.3 405.0 318.0 C409.6 304.7 404.8 310.3 412.5 299.0 C420.2 287.7 414.6 293.7 428.0 284.0 C441.4 274.3 436.6 277.0 452.6 270.0 C468.6 263.0 465.5 267.0 476.0 263.0 C486.5 259.0 481.0 262.3 484.0 258.0 C487.0 253.7 485.0 250.0 485.0 250.0 Z" fill="none" stroke="#84695e" stroke-width="10" filter="url(#b4)" opacity="0.8"/><ellipse cx="533" cy="322" rx="46" ry="30" fill="#d0b6aa" opacity="0.75" filter="url(#b12)"/><ellipse cx="534" cy="505" rx="30" ry="46" fill="#d0b6aa" opacity="0.8" filter="url(#b12)"/><ellipse cx="534" cy="585" rx="50" ry="28" fill="#d0b6aa" opacity="0.7" filter="url(#b12)"/><ellipse cx="466" cy="690" rx="20" ry="90" fill="#d2b8ad" opacity="0.8" filter="url(#b12)"/><ellipse cx="602" cy="690" rx="20" ry="90" fill="#d2b8ad" opacity="0.8" filter="url(#b12)"/><ellipse cx="460" cy="890" rx="13" ry="60" fill="#d0b6aa" opacity="0.8" filter="url(#b12)"/><ellipse cx="610" cy="885" rx="13" ry="60" fill="#d0b6aa" opacity="0.8" filter="url(#b12)"/><ellipse cx="465" cy="824" rx="16" ry="11" fill="#dca8a2" opacity="0.8" filter="url(#b4)"/><ellipse cx="603" cy="822" rx="16" ry="11" fill="#dca8a2" opacity="0.8" filter="url(#b4)"/><ellipse cx="463" cy="856" rx="14" ry="5" fill="#9a7f74" opacity="0.3" filter="url(#b4)"/><ellipse cx="600" cy="850" rx="14" ry="5" fill="#9a7f74" opacity="0.3" filter="url(#b4)"/><path d="M428 305 L378 415 L318 530" fill="none" stroke="#d0b6aa" stroke-width="12" opacity="0.8" filter="url(#b6)"/><path d="M640 305 L690 415 L738 525" fill="none" stroke="#d0b6aa" stroke-width="12" opacity="0.8" filter="url(#b6)"/><ellipse cx="490" cy="412" rx="40" ry="40" fill="#7e6a62" opacity="0.75" filter="url(#b6)"/><ellipse cx="586" cy="411" rx="40" ry="40" fill="#7e6a62" opacity="0.75" filter="url(#b6)"/><path d="M534 470 V545" fill="none" stroke="#a48d83" stroke-width="5" opacity="0.45" filter="url(#b3)"/><ellipse cx="538.5" cy="519" rx="1.6" ry="4" fill="#6e5a54" opacity="0.8" filter="url(#b2)"/></g><circle cx="487" cy="396" r="44" fill="url(#cf)"/><g clip-path="url(#cl)"><ellipse cx="437" cy="402" rx="16" ry="44" fill="#8a756c" opacity="0.7" filter="url(#b6)"/><ellipse cx="533" cy="406" rx="7" ry="26" fill="#a88e83" opacity="0.4" filter="url(#b6)"/><ellipse cx="491" cy="408" rx="20" ry="16" fill="#d8c0b5" opacity="0.8" filter="url(#b6)"/></g><circle cx="589" cy="395" r="44" fill="url(#cf)"/><g clip-path="url(#cr)"><ellipse cx="639" cy="401" rx="16" ry="44" fill="#8a756c" opacity="0.7" filter="url(#b6)"/><ellipse cx="543" cy="405" rx="7" ry="26" fill="#a88e83" opacity="0.4" filter="url(#b6)"/><ellipse cx="585" cy="407" rx="20" ry="16" fill="#d8c0b5" opacity="0.8" filter="url(#b6)"/></g><path d="M485.4 280 L468.4 351 M583.8 281 L612.6 350" stroke="#111" stroke-width="2.4" fill="none"/><path d="M485.6 280 L486.6 249.4 L573.6 250.2 L583.6 280.5" stroke="#2a1010" stroke-width="1.2" fill="none"/><path d="M508 418.6 L584 411.4 L584 414.8 Z" fill="#111" stroke="#111" stroke-width="1.3"/><polygon points="467.5,351 456,372 451,392 453,416 460,439 463,431 470,420 507,418.5 497,401 485,381 472,357" fill="#111"/><polygon points="612.5,351 624,370 632,389 629.5,412 616,436 613,428 607,418 585,414 594,401 603,387 609,358" fill="#111"/><g fill="#ff0000"><circle cx="487.9" cy="249.3" r="2.5"/><circle cx="493.7" cy="249.3" r="2.5"/><circle cx="499.3" cy="249.5" r="2.5"/><circle cx="504.8" cy="249.6" r="2.5"/><circle cx="510.5" cy="249.6" r="2.5"/><circle cx="516.2" cy="249.5" r="2.5"/><circle cx="522.0" cy="249.9" r="2.5"/><circle cx="527.5" cy="249.7" r="2.5"/><circle cx="533.4" cy="250.0" r="2.5"/><circle cx="539.0" cy="249.8" r="2.5"/><circle cx="544.9" cy="249.8" r="2.5"/><circle cx="550.5" cy="249.9" r="2.5"/><circle cx="555.9" cy="249.9" r="2.5"/><circle cx="561.6" cy="250.2" r="2.5"/><circle cx="567.2" cy="250.2" r="2.5"/><circle cx="573.1" cy="250.1" r="2.5"/><circle cx="514.1" cy="249.8" r="2.9"/><circle cx="515.7" cy="250.1" r="2.9"/><circle cx="519.3" cy="250.5" r="2.9"/><circle cx="521.2" cy="250.8" r="2.9"/><circle cx="523.9" cy="250.2" r="2.9"/><circle cx="527.0" cy="251.0" r="2.9"/><circle cx="528.5" cy="250.7" r="2.9"/><circle cx="531.5" cy="251.3" r="2.9"/><circle cx="534.4" cy="250.2" r="2.9"/><circle cx="537.4" cy="249.9" r="2.9"/><circle cx="538.9" cy="251.1" r="2.9"/><circle cx="540.9" cy="250.6" r="2.9"/><circle cx="543.2" cy="250.9" r="2.9"/><circle cx="486.8" cy="249.0" r="2.5"/><circle cx="486.7" cy="254.1" r="2.5"/><circle cx="486.4" cy="259.4" r="2.5"/><circle cx="486.1" cy="264.5" r="2.5"/><circle cx="486.1" cy="269.9" r="2.5"/><circle cx="485.8" cy="274.9" r="2.5"/><circle cx="485.3" cy="280.1" r="2.5"/><circle cx="574.1" cy="250.3" r="2.5"/><circle cx="575.8" cy="255.0" r="2.5"/><circle cx="577.1" cy="260.3" r="2.5"/><circle cx="578.5" cy="265.2" r="2.5"/><circle cx="580.2" cy="270.1" r="2.5"/><circle cx="581.7" cy="275.6" r="2.5"/><circle cx="583.4" cy="280.3" r="2.5"/><circle cx="487.9" cy="248.9" r="2.4"/><circle cx="486.6" cy="250.9" r="2.4"/><circle cx="486.0" cy="253.9" r="2.4"/><circle cx="485.3" cy="256.4" r="2.4"/><circle cx="571.8" cy="248.9" r="2.4"/><circle cx="573.5" cy="252.1" r="2.4"/><circle cx="575.8" cy="254.0" r="2.4"/><circle cx="576.7" cy="256.7" r="2.4"/><circle cx="467.0" cy="351.0" r="2.3"/><circle cx="465.7" cy="354.1" r="2.3"/><circle cx="462.8" cy="357.9" r="2.3"/><circle cx="461.5" cy="361.6" r="2.3"/><circle cx="460.6" cy="365.3" r="2.3"/><circle cx="457.9" cy="368.7" r="2.3"/><circle cx="456.3" cy="371.2" r="2.3"/><circle cx="456.7" cy="372.5" r="2.3"/><circle cx="455.7" cy="376.5" r="2.3"/><circle cx="453.8" cy="379.8" r="2.3"/><circle cx="452.3" cy="384.2" r="2.3"/><circle cx="451.2" cy="387.2" r="2.3"/><circle cx="450.5" cy="391.4" r="2.3"/><circle cx="450.7" cy="391.2" r="2.3"/><circle cx="450.4" cy="395.4" r="2.3"/><circle cx="450.9" cy="399.8" r="2.3"/><circle cx="451.1" cy="404.7" r="2.3"/><circle cx="452.5" cy="407.4" r="2.3"/><circle cx="452.2" cy="411.7" r="2.3"/><circle cx="452.8" cy="415.3" r="2.3"/><circle cx="453.6" cy="416.9" r="2.3"/><circle cx="454.1" cy="419.8" r="2.3"/><circle cx="454.6" cy="423.0" r="2.3"/><circle cx="456.2" cy="427.1" r="2.3"/><circle cx="458.3" cy="430.7" r="2.3"/><circle cx="458.0" cy="436.0" r="2.3"/><circle cx="460.1" cy="438.4" r="2.3"/><circle cx="460.1" cy="438.1" r="2.3"/><circle cx="461.6" cy="435.9" r="2.3"/><circle cx="463.7" cy="431.4" r="2.3"/><circle cx="462.6" cy="430.8" r="2.3"/><circle cx="464.7" cy="427.8" r="2.3"/><circle cx="467.7" cy="424.2" r="2.3"/><circle cx="469.7" cy="419.5" r="2.3"/><circle cx="470.6" cy="420.9" r="2.3"/><circle cx="474.3" cy="420.4" r="2.3"/><circle cx="478.0" cy="420.1" r="2.3"/><circle cx="480.6" cy="419.6" r="2.3"/><circle cx="484.5" cy="418.6" r="2.3"/><circle cx="487.7" cy="418.9" r="2.3"/><circle cx="491.8" cy="419.4" r="2.3"/><circle cx="496.7" cy="418.9" r="2.3"/><circle cx="500.4" cy="419.7" r="2.3"/><circle cx="504.1" cy="418.4" r="2.3"/><circle cx="506.5" cy="418.0" r="2.3"/><circle cx="506.5" cy="418.0" r="2.3"/><circle cx="505.2" cy="415.7" r="2.3"/><circle cx="503.6" cy="411.5" r="2.3"/><circle cx="501.3" cy="408.5" r="2.3"/><circle cx="498.3" cy="404.8" r="2.3"/><circle cx="497.7" cy="401.5" r="2.3"/><circle cx="497.5" cy="401.0" r="2.3"/><circle cx="494.4" cy="398.2" r="2.3"/><circle cx="492.7" cy="394.9" r="2.3"/><circle cx="491.8" cy="390.8" r="2.3"/><circle cx="488.8" cy="388.5" r="2.3"/><circle cx="487.4" cy="383.7" r="2.3"/><circle cx="484.3" cy="380.4" r="2.3"/><circle cx="485.7" cy="381.6" r="2.3"/><circle cx="482.5" cy="378.2" r="2.3"/><circle cx="482.2" cy="374.4" r="2.3"/><circle cx="479.2" cy="370.8" r="2.3"/><circle cx="476.9" cy="366.4" r="2.3"/><circle cx="476.6" cy="364.1" r="2.3"/><circle cx="473.9" cy="361.2" r="2.3"/><circle cx="471.9" cy="357.7" r="2.3"/><circle cx="472.6" cy="356.5" r="2.3"/><circle cx="469.3" cy="353.6" r="2.3"/><circle cx="467.0" cy="351.2" r="2.3"/><circle cx="465.5" cy="387.9" r="2.3"/><circle cx="458.3" cy="431.1" r="2.3"/><circle cx="470.8" cy="391.3" r="2.3"/><circle cx="479.1" cy="397.8" r="2.3"/><circle cx="475.6" cy="367.1" r="2.3"/><circle cx="460.7" cy="392.7" r="2.3"/><circle cx="491.6" cy="400.0" r="2.3"/><circle cx="469.3" cy="396.6" r="2.3"/><circle cx="456.9" cy="400.3" r="2.3"/><circle cx="464.9" cy="375.4" r="2.3"/><circle cx="482.5" cy="417.9" r="2.3"/><circle cx="485.3" cy="395.5" r="2.3"/><circle cx="479.7" cy="412.0" r="2.3"/><circle cx="476.3" cy="397.9" r="2.3"/><circle cx="457.8" cy="389.9" r="2.3"/><circle cx="455.1" cy="409.9" r="2.3"/><circle cx="459.6" cy="414.0" r="2.3"/><circle cx="473.3" cy="393.9" r="2.3"/><circle cx="460.0" cy="389.0" r="2.3"/><circle cx="479.9" cy="380.8" r="2.3"/><circle cx="462.0" cy="379.0" r="2.3"/><circle cx="482.0" cy="389.8" r="2.3"/><circle cx="485.9" cy="396.1" r="2.3"/><circle cx="456.9" cy="374.4" r="2.3"/><circle cx="466.1" cy="362.4" r="2.3"/><circle cx="459.4" cy="431.9" r="2.3"/><circle cx="483.0" cy="412.6" r="2.3"/><circle cx="476.4" cy="380.8" r="2.3"/><circle cx="466.0" cy="362.4" r="2.3"/><circle cx="468.5" cy="377.8" r="2.3"/><circle cx="492.1" cy="399.5" r="2.3"/><circle cx="461.6" cy="392.8" r="2.3"/><circle cx="473.0" cy="395.6" r="2.3"/><circle cx="490.6" cy="407.0" r="2.3"/><circle cx="473.7" cy="381.6" r="2.3"/><circle cx="455.0" cy="416.2" r="2.3"/><circle cx="465.3" cy="365.4" r="2.3"/><circle cx="499.8" cy="410.0" r="2.3"/><circle cx="466.8" cy="372.3" r="2.3"/><circle cx="467.4" cy="391.4" r="2.3"/><circle cx="459.8" cy="390.2" r="2.3"/><circle cx="468.3" cy="382.4" r="2.3"/><circle cx="477.6" cy="395.2" r="2.3"/><circle cx="462.3" cy="395.4" r="2.3"/><circle cx="456.0" cy="386.2" r="2.3"/><circle cx="468.0" cy="371.5" r="2.3"/><circle cx="483.8" cy="397.6" r="2.3"/><circle cx="493.0" cy="408.9" r="2.3"/><circle cx="472.8" cy="379.7" r="2.3"/><circle cx="491.6" cy="407.6" r="2.3"/><circle cx="458.8" cy="397.1" r="2.3"/><circle cx="489.2" cy="412.0" r="2.3"/><circle cx="458.5" cy="382.7" r="2.3"/><circle cx="456.9" cy="424.6" r="2.3"/><circle cx="482.3" cy="406.2" r="2.3"/><circle cx="486.1" cy="410.9" r="2.3"/><circle cx="495.7" cy="416.8" r="2.3"/><circle cx="479.2" cy="398.1" r="2.3"/><circle cx="478.7" cy="384.7" r="2.3"/><circle cx="477.8" cy="411.2" r="2.3"/><circle cx="494.0" cy="405.3" r="2.3"/><circle cx="459.3" cy="373.3" r="2.3"/><circle cx="488.6" cy="411.9" r="2.3"/><circle cx="479.9" cy="391.9" r="2.3"/><circle cx="452.0" cy="391.4" r="2.3"/><circle cx="476.2" cy="374.6" r="2.3"/><circle cx="462.8" cy="402.2" r="2.3"/><circle cx="458.9" cy="397.1" r="2.3"/><circle cx="500.7" cy="412.9" r="2.3"/><circle cx="451.2" cy="394.3" r="2.3"/><circle cx="476.2" cy="377.6" r="2.3"/><circle cx="458.9" cy="381.3" r="2.3"/><circle cx="502.9" cy="413.7" r="2.3"/><circle cx="471.8" cy="385.6" r="2.3"/><circle cx="471.2" cy="388.7" r="2.3"/><circle cx="466.4" cy="355.2" r="2.3"/><circle cx="456.7" cy="424.5" r="2.3"/><circle cx="465.0" cy="374.4" r="2.3"/><circle cx="493.1" cy="407.7" r="2.3"/><circle cx="467.0" cy="355.3" r="2.3"/><circle cx="477.4" cy="381.2" r="2.3"/><circle cx="467.7" cy="416.0" r="2.3"/><circle cx="482.2" cy="385.7" r="2.3"/><circle cx="460.4" cy="365.2" r="2.3"/><circle cx="462.6" cy="430.7" r="2.3"/><circle cx="478.8" cy="370.4" r="2.3"/><circle cx="470.1" cy="359.0" r="2.3"/><circle cx="464.4" cy="373.7" r="2.3"/><circle cx="474.2" cy="397.1" r="2.3"/><circle cx="472.1" cy="380.8" r="2.3"/><circle cx="479.2" cy="406.4" r="2.3"/><circle cx="466.2" cy="372.9" r="2.3"/><circle cx="473.4" cy="390.2" r="2.3"/><circle cx="452.8" cy="413.4" r="2.3"/><circle cx="480.3" cy="411.0" r="2.3"/><circle cx="503.7" cy="414.5" r="2.3"/><circle cx="487.3" cy="418.3" r="2.3"/><circle cx="476.6" cy="399.5" r="2.3"/><circle cx="458.2" cy="373.2" r="2.3"/><circle cx="486.6" cy="412.5" r="2.3"/><circle cx="480.4" cy="402.3" r="2.3"/><circle cx="472.7" cy="370.7" r="2.3"/><circle cx="467.9" cy="391.5" r="2.3"/><circle cx="464.1" cy="372.7" r="2.3"/><circle cx="468.2" cy="352.9" r="2.3"/><circle cx="478.9" cy="410.4" r="2.3"/><circle cx="474.5" cy="373.6" r="2.3"/><circle cx="469.9" cy="388.0" r="2.3"/><circle cx="495.6" cy="416.0" r="2.3"/><circle cx="463.4" cy="417.9" r="2.3"/><circle cx="463.5" cy="387.7" r="2.3"/><circle cx="459.2" cy="385.6" r="2.3"/><circle cx="454.4" cy="385.6" r="2.3"/><circle cx="461.4" cy="433.4" r="2.3"/><circle cx="471.9" cy="380.2" r="2.3"/><circle cx="466.7" cy="381.9" r="2.3"/><circle cx="453.8" cy="392.7" r="2.3"/><circle cx="461.8" cy="383.1" r="2.3"/><circle cx="470.0" cy="375.0" r="2.3"/><circle cx="465.7" cy="414.1" r="2.3"/><circle cx="468.7" cy="375.3" r="2.3"/><circle cx="464.1" cy="392.8" r="2.3"/><circle cx="472.6" cy="373.1" r="2.3"/><circle cx="475.1" cy="394.4" r="2.3"/><circle cx="495.9" cy="416.0" r="2.3"/><circle cx="468.9" cy="382.8" r="2.3"/><circle cx="462.0" cy="417.3" r="2.3"/><circle cx="464.8" cy="356.7" r="2.3"/><circle cx="452.9" cy="399.6" r="2.3"/><circle cx="465.8" cy="358.4" r="2.3"/><circle cx="611.8" cy="351.0" r="2.3"/><circle cx="614.8" cy="354.1" r="2.3"/><circle cx="615.9" cy="357.2" r="2.3"/><circle cx="618.5" cy="360.8" r="2.3"/><circle cx="620.6" cy="364.3" r="2.3"/><circle cx="622.4" cy="366.2" r="2.3"/><circle cx="624.6" cy="369.6" r="2.3"/><circle cx="624.1" cy="369.8" r="2.3"/><circle cx="626.0" cy="373.3" r="2.3"/><circle cx="626.7" cy="377.1" r="2.3"/><circle cx="628.2" cy="382.1" r="2.3"/><circle cx="630.5" cy="384.9" r="2.3"/><circle cx="631.8" cy="389.9" r="2.3"/><circle cx="632.0" cy="388.5" r="2.3"/><circle cx="632.1" cy="393.1" r="2.3"/><circle cx="632.1" cy="396.0" r="2.3"/><circle cx="630.7" cy="401.1" r="2.3"/><circle cx="630.9" cy="405.1" r="2.3"/><circle cx="629.1" cy="407.8" r="2.3"/><circle cx="628.8" cy="411.4" r="2.3"/><circle cx="630.4" cy="412.1" r="2.3"/><circle cx="628.3" cy="415.2" r="2.3"/><circle cx="626.3" cy="418.8" r="2.3"/><circle cx="623.3" cy="422.8" r="2.3"/><circle cx="622.6" cy="425.0" r="2.3"/><circle cx="620.0" cy="429.4" r="2.3"/><circle cx="617.4" cy="432.3" r="2.3"/><circle cx="615.4" cy="435.5" r="2.3"/><circle cx="615.6" cy="436.2" r="2.3"/><circle cx="614.8" cy="431.5" r="2.3"/><circle cx="612.1" cy="427.7" r="2.3"/><circle cx="613.3" cy="427.4" r="2.3"/><circle cx="610.7" cy="424.1" r="2.3"/><circle cx="609.5" cy="421.4" r="2.3"/><circle cx="606.2" cy="417.3" r="2.3"/><circle cx="606.8" cy="418.1" r="2.3"/><circle cx="603.6" cy="416.6" r="2.3"/><circle cx="599.1" cy="417.0" r="2.3"/><circle cx="595.8" cy="415.6" r="2.3"/><circle cx="592.0" cy="416.1" r="2.3"/><circle cx="588.3" cy="414.8" r="2.3"/><circle cx="584.7" cy="413.8" r="2.3"/><circle cx="585.7" cy="414.9" r="2.3"/><circle cx="587.0" cy="410.2" r="2.3"/><circle cx="589.9" cy="407.0" r="2.3"/><circle cx="590.9" cy="405.0" r="2.3"/><circle cx="593.9" cy="401.6" r="2.3"/><circle cx="593.8" cy="401.7" r="2.3"/><circle cx="596.2" cy="396.9" r="2.3"/><circle cx="597.6" cy="394.1" r="2.3"/><circle cx="601.0" cy="391.2" r="2.3"/><circle cx="602.3" cy="387.2" r="2.3"/><circle cx="602.8" cy="387.0" r="2.3"/><circle cx="603.1" cy="383.0" r="2.3"/><circle cx="604.5" cy="380.5" r="2.3"/><circle cx="604.5" cy="376.1" r="2.3"/><circle cx="606.5" cy="373.3" r="2.3"/><circle cx="606.2" cy="368.2" r="2.3"/><circle cx="608.3" cy="366.1" r="2.3"/><circle cx="608.2" cy="360.8" r="2.3"/><circle cx="609.8" cy="357.8" r="2.3"/><circle cx="609.7" cy="358.2" r="2.3"/><circle cx="611.3" cy="353.9" r="2.3"/><circle cx="613.0" cy="350.5" r="2.3"/><circle cx="609.3" cy="383.6" r="2.3"/><circle cx="619.1" cy="427.3" r="2.3"/><circle cx="613.2" cy="397.8" r="2.3"/><circle cx="614.5" cy="377.0" r="2.3"/><circle cx="604.7" cy="400.5" r="2.3"/><circle cx="605.0" cy="407.0" r="2.3"/><circle cx="606.0" cy="388.3" r="2.3"/><circle cx="608.0" cy="371.0" r="2.3"/><circle cx="620.9" cy="417.3" r="2.3"/><circle cx="614.9" cy="358.0" r="2.3"/><circle cx="619.5" cy="417.1" r="2.3"/><circle cx="608.7" cy="383.1" r="2.3"/><circle cx="619.4" cy="420.3" r="2.3"/><circle cx="620.5" cy="364.5" r="2.3"/><circle cx="608.8" cy="378.1" r="2.3"/><circle cx="616.9" cy="427.1" r="2.3"/><circle cx="614.9" cy="381.6" r="2.3"/><circle cx="626.0" cy="398.2" r="2.3"/><circle cx="612.3" cy="426.0" r="2.3"/><circle cx="614.6" cy="384.5" r="2.3"/><circle cx="622.5" cy="373.5" r="2.3"/><circle cx="601.9" cy="416.0" r="2.3"/><circle cx="623.5" cy="372.6" r="2.3"/><circle cx="612.5" cy="407.4" r="2.3"/><circle cx="614.0" cy="387.7" r="2.3"/><circle cx="595.5" cy="400.6" r="2.3"/><circle cx="612.7" cy="368.4" r="2.3"/><circle cx="614.3" cy="391.4" r="2.3"/><circle cx="626.0" cy="417.5" r="2.3"/><circle cx="611.4" cy="380.8" r="2.3"/><circle cx="615.3" cy="388.7" r="2.3"/><circle cx="594.4" cy="402.7" r="2.3"/><circle cx="608.8" cy="405.5" r="2.3"/><circle cx="621.8" cy="411.8" r="2.3"/><circle cx="620.0" cy="390.5" r="2.3"/><circle cx="619.9" cy="389.5" r="2.3"/><circle cx="600.8" cy="414.7" r="2.3"/><circle cx="617.7" cy="422.9" r="2.3"/><circle cx="618.4" cy="373.6" r="2.3"/><circle cx="611.0" cy="388.1" r="2.3"/><circle cx="622.1" cy="395.5" r="2.3"/><circle cx="597.5" cy="405.6" r="2.3"/><circle cx="620.1" cy="378.8" r="2.3"/><circle cx="626.4" cy="378.9" r="2.3"/><circle cx="614.6" cy="409.9" r="2.3"/><circle cx="616.3" cy="434.2" r="2.3"/><circle cx="617.8" cy="423.9" r="2.3"/><circle cx="605.5" cy="412.6" r="2.3"/><circle cx="611.8" cy="377.2" r="2.3"/><circle cx="595.0" cy="403.9" r="2.3"/><circle cx="617.6" cy="404.9" r="2.3"/><circle cx="617.8" cy="413.6" r="2.3"/><circle cx="624.8" cy="420.0" r="2.3"/><circle cx="614.8" cy="421.1" r="2.3"/><circle cx="614.7" cy="375.4" r="2.3"/><circle cx="620.6" cy="368.4" r="2.3"/><circle cx="598.3" cy="411.8" r="2.3"/><circle cx="630.3" cy="393.8" r="2.3"/><circle cx="625.0" cy="403.6" r="2.3"/><circle cx="605.5" cy="416.7" r="2.3"/><circle cx="601.3" cy="410.9" r="2.3"/><circle cx="610.3" cy="369.4" r="2.3"/><circle cx="608.1" cy="418.7" r="2.3"/><circle cx="617.9" cy="393.4" r="2.3"/><circle cx="617.8" cy="417.9" r="2.3"/><circle cx="614.5" cy="381.2" r="2.3"/><circle cx="603.9" cy="384.5" r="2.3"/><circle cx="627.4" cy="393.6" r="2.3"/><circle cx="610.0" cy="415.1" r="2.3"/><circle cx="620.4" cy="405.9" r="2.3"/><circle cx="616.1" cy="414.1" r="2.3"/><circle cx="621.4" cy="400.2" r="2.3"/><circle cx="618.0" cy="422.7" r="2.3"/><circle cx="609.5" cy="364.7" r="2.3"/><circle cx="619.5" cy="388.0" r="2.3"/><circle cx="594.2" cy="405.2" r="2.3"/><circle cx="617.6" cy="393.5" r="2.3"/><circle cx="614.7" cy="390.4" r="2.3"/><circle cx="604.0" cy="414.0" r="2.3"/><circle cx="627.7" cy="387.6" r="2.3"/><circle cx="612.0" cy="414.7" r="2.3"/><circle cx="618.9" cy="425.8" r="2.3"/><circle cx="621.4" cy="410.5" r="2.3"/><circle cx="625.1" cy="408.8" r="2.3"/><circle cx="615.2" cy="389.6" r="2.3"/><circle cx="599.7" cy="404.4" r="2.3"/><circle cx="621.8" cy="411.6" r="2.3"/><circle cx="614.6" cy="372.3" r="2.3"/><circle cx="604.9" cy="389.7" r="2.3"/><circle cx="614.2" cy="385.8" r="2.3"/><circle cx="616.7" cy="430.1" r="2.3"/><circle cx="593.6" cy="406.6" r="2.3"/><circle cx="621.6" cy="384.0" r="2.3"/><circle cx="629.2" cy="395.1" r="2.3"/><circle cx="610.4" cy="412.0" r="2.3"/><circle cx="609.1" cy="405.3" r="2.3"/><circle cx="624.0" cy="395.3" r="2.3"/><circle cx="594.9" cy="409.2" r="2.3"/><circle cx="603.4" cy="415.8" r="2.3"/><circle cx="604.8" cy="410.4" r="2.3"/><circle cx="595.5" cy="414.0" r="2.3"/><circle cx="629.2" cy="395.8" r="2.3"/><circle cx="623.0" cy="404.9" r="2.3"/><circle cx="607.1" cy="398.8" r="2.3"/><circle cx="601.6" cy="405.3" r="2.3"/><circle cx="623.5" cy="420.4" r="2.3"/><circle cx="607.0" cy="376.0" r="2.3"/><circle cx="610.8" cy="361.6" r="2.3"/><circle cx="624.2" cy="381.2" r="2.3"/><circle cx="625.0" cy="373.7" r="2.3"/><circle cx="605.1" cy="405.2" r="2.3"/><circle cx="616.0" cy="381.8" r="2.3"/><circle cx="615.8" cy="372.3" r="2.3"/><circle cx="613.6" cy="417.4" r="2.3"/><circle cx="616.4" cy="427.0" r="2.3"/><circle cx="622.0" cy="422.3" r="2.3"/><circle cx="594.3" cy="409.9" r="2.3"/><circle cx="609.9" cy="414.1" r="2.3"/><circle cx="611.1" cy="373.5" r="2.3"/><circle cx="608.1" cy="393.3" r="2.3"/><circle cx="607.0" cy="398.8" r="2.3"/><circle cx="616.3" cy="422.4" r="2.3"/><circle cx="614.9" cy="405.1" r="2.3"/><circle cx="617.1" cy="430.2" r="2.3"/><circle cx="609.0" cy="392.2" r="2.3"/><circle cx="618.8" cy="404.1" r="2.3"/><circle cx="602.2" cy="391.3" r="2.3"/><circle cx="609.7" cy="416.5" r="2.3"/><circle cx="604.9" cy="398.1" r="2.3"/><circle cx="623.9" cy="375.9" r="2.3"/></g><g fill="#111"><circle cx="477.1" cy="383.4" r="1.4"/><circle cx="477.2" cy="412.9" r="1.4"/><circle cx="482.9" cy="405.3" r="1.4"/><circle cx="470.6" cy="385.3" r="1.4"/><circle cx="469.4" cy="396.6" r="1.4"/><circle cx="482.1" cy="404.9" r="1.4"/><circle cx="483.0" cy="405.1" r="1.4"/><circle cx="481.4" cy="398.3" r="1.4"/><circle cx="484.5" cy="397.0" r="1.4"/><circle cx="483.3" cy="391.2" r="1.4"/><circle cx="487.4" cy="410.4" r="1.4"/><circle cx="482.9" cy="387.5" r="1.4"/><circle cx="489.3" cy="405.0" r="1.4"/><circle cx="479.4" cy="382.8" r="1.4"/><circle cx="469.5" cy="389.7" r="1.4"/><circle cx="470.1" cy="390.1" r="1.4"/><circle cx="482.4" cy="411.2" r="1.4"/><circle cx="460.1" cy="395.8" r="1.4"/><circle cx="488.8" cy="396.2" r="1.4"/><circle cx="480.5" cy="411.4" r="1.4"/><circle cx="485.1" cy="407.9" r="1.4"/><circle cx="481.9" cy="401.8" r="1.4"/><circle cx="475.5" cy="411.2" r="1.4"/><circle cx="458.6" cy="399.3" r="1.4"/><circle cx="469.8" cy="402.6" r="1.4"/><circle cx="472.0" cy="396.1" r="1.4"/><circle cx="474.7" cy="400.4" r="1.4"/><circle cx="463.5" cy="405.5" r="1.4"/><circle cx="471.8" cy="399.1" r="1.4"/><circle cx="481.9" cy="389.6" r="1.4"/><circle cx="472.7" cy="405.0" r="1.4"/><circle cx="479.5" cy="384.3" r="1.4"/><circle cx="484.7" cy="406.8" r="1.4"/><circle cx="470.6" cy="397.4" r="1.4"/><circle cx="612.4" cy="384.3" r="1.4"/><circle cx="606.6" cy="407.5" r="1.4"/><circle cx="604.8" cy="399.4" r="1.4"/><circle cx="612.5" cy="407.8" r="1.4"/><circle cx="606.4" cy="395.5" r="1.4"/><circle cx="611.4" cy="383.0" r="1.4"/><circle cx="615.3" cy="408.5" r="1.4"/><circle cx="610.8" cy="403.9" r="1.4"/><circle cx="598.8" cy="402.0" r="1.4"/><circle cx="612.6" cy="399.1" r="1.4"/><circle cx="600.7" cy="402.0" r="1.4"/><circle cx="618.9" cy="390.4" r="1.4"/><circle cx="595.0" cy="404.3" r="1.4"/><circle cx="618.3" cy="381.3" r="1.4"/><circle cx="611.7" cy="407.9" r="1.4"/><circle cx="622.1" cy="392.9" r="1.4"/><circle cx="608.2" cy="395.6" r="1.4"/><circle cx="598.1" cy="400.0" r="1.4"/><circle cx="604.3" cy="394.6" r="1.4"/><circle cx="605.7" cy="392.7" r="1.4"/><circle cx="612.3" cy="385.8" r="1.4"/><circle cx="621.4" cy="391.5" r="1.4"/><circle cx="611.3" cy="382.5" r="1.4"/><circle cx="618.5" cy="389.0" r="1.4"/><circle cx="611.0" cy="406.8" r="1.4"/><circle cx="607.6" cy="409.9" r="1.4"/><circle cx="612.3" cy="387.9" r="1.4"/><circle cx="600.7" cy="394.6" r="1.4"/><circle cx="613.8" cy="410.3" r="1.4"/><circle cx="614.8" cy="387.7" r="1.4"/><circle cx="618.7" cy="400.4" r="1.4"/><circle cx="614.0" cy="411.4" r="1.4"/><circle cx="615.0" cy="384.0" r="1.4"/><circle cx="612.1" cy="402.3" r="1.4"/></g><ellipse cx="537.6" cy="613" rx="19" ry="8" fill="#6f574d" opacity="0.55" filter="url(#b3)"/><path d="M452 524 L447.4 535 L450 548 L509.5 623.4 M613.4 525 L617.2 537 L614.5 548 L562 623.4" stroke="#2a2a2a" stroke-width="1.4" fill="none"/><polygon points="509.3,621 521,625.5 537,627 553,625.5 565,620.6 560,632 550,641 538,646 527,645 518,639 512,630" fill="#00e800"/><g fill="#00ff00"><circle cx="452.6" cy="522.8" r="2.5"/><circle cx="451.4" cy="525.6" r="2.5"/><circle cx="450.2" cy="528.7" r="2.5"/><circle cx="448.5" cy="531.6" r="2.5"/><circle cx="447.6" cy="534.5" r="2.5"/><circle cx="447.6" cy="534.7" r="2.5"/><circle cx="447.6" cy="538.7" r="2.5"/><circle cx="448.4" cy="541.9" r="2.5"/><circle cx="449.7" cy="545.1" r="2.5"/><circle cx="449.6" cy="547.9" r="2.5"/><circle cx="612.2" cy="524.9" r="2.5"/><circle cx="614.0" cy="527.8" r="2.5"/><circle cx="614.8" cy="530.6" r="2.5"/><circle cx="616.2" cy="533.9" r="2.5"/><circle cx="617.1" cy="536.6" r="2.5"/><circle cx="616.7" cy="536.6" r="2.5"/><circle cx="616.3" cy="540.7" r="2.5"/><circle cx="614.9" cy="544.7" r="2.5"/><circle cx="614.2" cy="547.9" r="2.5"/><circle cx="451.0" cy="524.3" r="2.5"/><circle cx="450.7" cy="527.8" r="2.5"/><circle cx="449.0" cy="531.5" r="2.5"/><circle cx="448.2" cy="535.4" r="2.5"/><circle cx="448.0" cy="535.5" r="2.5"/><circle cx="448.8" cy="538.6" r="2.5"/><circle cx="450.2" cy="541.2" r="2.5"/><circle cx="450.9" cy="544.5" r="2.5"/><circle cx="451.5" cy="547.7" r="2.5"/><circle cx="614.2" cy="526.5" r="2.5"/><circle cx="615.4" cy="530.1" r="2.5"/><circle cx="615.0" cy="533.1" r="2.5"/><circle cx="616.4" cy="536.6" r="2.5"/><circle cx="616.2" cy="536.8" r="2.5"/><circle cx="615.4" cy="540.2" r="2.5"/><circle cx="614.1" cy="544.2" r="2.5"/><circle cx="612.3" cy="547.5" r="2.5"/><circle cx="449.9" cy="526.0" r="2.5"/><circle cx="449.2" cy="528.9" r="2.5"/><circle cx="449.9" cy="531.7" r="2.5"/><circle cx="449.5" cy="534.6" r="2.5"/><circle cx="449.1" cy="535.3" r="2.5"/><circle cx="450.6" cy="537.9" r="2.5"/><circle cx="451.0" cy="541.1" r="2.5"/><circle cx="452.5" cy="544.7" r="2.5"/><circle cx="453.2" cy="547.7" r="2.5"/><circle cx="616.1" cy="527.7" r="2.5"/><circle cx="616.0" cy="530.7" r="2.5"/><circle cx="615.0" cy="533.4" r="2.5"/><circle cx="615.2" cy="536.9" r="2.5"/><circle cx="615.2" cy="536.6" r="2.5"/><circle cx="614.0" cy="540.5" r="2.5"/><circle cx="612.7" cy="544.7" r="2.5"/><circle cx="611.0" cy="547.5" r="2.5"/><circle cx="450.5" cy="548.0" r="2.6"/><circle cx="452.7" cy="550.4" r="2.6"/><circle cx="454.2" cy="553.8" r="2.6"/><circle cx="456.7" cy="555.7" r="2.6"/><circle cx="459.0" cy="558.9" r="2.6"/><circle cx="460.8" cy="561.5" r="2.6"/><circle cx="463.6" cy="564.2" r="2.6"/><circle cx="465.5" cy="567.2" r="2.6"/><circle cx="468.6" cy="570.0" r="2.6"/><circle cx="470.3" cy="572.6" r="2.6"/><circle cx="472.7" cy="575.3" r="2.6"/><circle cx="451.0" cy="546.9" r="2.4"/><circle cx="454.4" cy="549.1" r="2.4"/><circle cx="456.2" cy="551.8" r="2.4"/><circle cx="458.6" cy="553.9" r="2.4"/><circle cx="461.5" cy="556.7" r="2.4"/><circle cx="462.9" cy="559.2" r="2.4"/><circle cx="465.3" cy="562.7" r="2.4"/><circle cx="467.4" cy="564.5" r="2.4"/><circle cx="478.3" cy="581.7" r="2.8"/><circle cx="483.2" cy="588.8" r="2.8"/><circle cx="488.6" cy="595.7" r="2.8"/><circle cx="493.8" cy="602.4" r="2.8"/><circle cx="499.1" cy="609.6" r="2.8"/><circle cx="503.9" cy="616.3" r="2.8"/><circle cx="509.3" cy="623.4" r="2.8"/><circle cx="614.2" cy="547.5" r="2.6"/><circle cx="612.4" cy="550.6" r="2.6"/><circle cx="610.6" cy="554.5" r="2.6"/><circle cx="608.0" cy="557.2" r="2.6"/><circle cx="606.7" cy="559.7" r="2.6"/><circle cx="604.8" cy="563.7" r="2.6"/><circle cx="602.2" cy="566.1" r="2.6"/><circle cx="600.7" cy="569.2" r="2.6"/><circle cx="598.2" cy="572.7" r="2.6"/><circle cx="613.3" cy="546.3" r="2.4"/><circle cx="610.7" cy="549.4" r="2.4"/><circle cx="608.9" cy="553.2" r="2.4"/><circle cx="607.4" cy="556.2" r="2.4"/><circle cx="605.4" cy="559.3" r="2.4"/><circle cx="602.5" cy="561.9" r="2.4"/><circle cx="601.5" cy="565.5" r="2.4"/><circle cx="593.1" cy="579.4" r="2.8"/><circle cx="588.1" cy="586.7" r="2.8"/><circle cx="582.8" cy="593.9" r="2.8"/><circle cx="577.6" cy="601.4" r="2.8"/><circle cx="572.2" cy="608.6" r="2.8"/><circle cx="567.4" cy="616.2" r="2.8"/><circle cx="562.2" cy="623.5" r="2.8"/><circle cx="509.7" cy="621.5" r="2.3"/><circle cx="512.7" cy="621.6" r="2.3"/><circle cx="515.3" cy="623.0" r="2.3"/><circle cx="518.3" cy="624.1" r="2.3"/><circle cx="521.1" cy="626.0" r="2.3"/><circle cx="521.1" cy="625.2" r="2.3"/><circle cx="524.2" cy="625.7" r="2.3"/><circle cx="527.9" cy="625.8" r="2.3"/><circle cx="530.4" cy="626.6" r="2.3"/><circle cx="533.3" cy="626.8" r="2.3"/><circle cx="537.5" cy="627.0" r="2.3"/><circle cx="536.7" cy="627.0" r="2.3"/><circle cx="540.2" cy="626.3" r="2.3"/><circle cx="542.9" cy="626.0" r="2.3"/><circle cx="546.4" cy="626.0" r="2.3"/><circle cx="549.5" cy="625.5" r="2.3"/><circle cx="552.5" cy="625.6" r="2.3"/><circle cx="553.4" cy="625.6" r="2.3"/><circle cx="556.1" cy="624.5" r="2.3"/><circle cx="558.6" cy="623.3" r="2.3"/><circle cx="562.0" cy="621.9" r="2.3"/><circle cx="565.1" cy="620.6" r="2.3"/><circle cx="564.8" cy="620.3" r="2.3"/><circle cx="563.4" cy="623.5" r="2.3"/><circle cx="562.4" cy="626.4" r="2.3"/><circle cx="560.7" cy="629.0" r="2.3"/><circle cx="560.4" cy="631.7" r="2.3"/><circle cx="560.1" cy="632.0" r="2.3"/><circle cx="557.2" cy="634.8" r="2.3"/><circle cx="554.8" cy="636.8" r="2.3"/><circle cx="552.1" cy="638.2" r="2.3"/><circle cx="550.4" cy="640.9" r="2.3"/><circle cx="549.5" cy="640.9" r="2.3"/><circle cx="546.9" cy="642.5" r="2.3"/><circle cx="543.5" cy="643.2" r="2.3"/><circle cx="541.6" cy="645.0" r="2.3"/><circle cx="537.6" cy="645.8" r="2.3"/><circle cx="537.8" cy="646.2" r="2.3"/><circle cx="534.5" cy="646.1" r="2.3"/><circle cx="531.1" cy="645.4" r="2.3"/><circle cx="527.3" cy="645.3" r="2.3"/><circle cx="527.3" cy="645.0" r="2.3"/><circle cx="524.3" cy="643.3" r="2.3"/><circle cx="521.5" cy="640.6" r="2.3"/><circle cx="518.4" cy="638.4" r="2.3"/><circle cx="518.3" cy="639.1" r="2.3"/><circle cx="516.0" cy="636.6" r="2.3"/><circle cx="514.1" cy="632.9" r="2.3"/><circle cx="512.3" cy="630.4" r="2.3"/><circle cx="512.1" cy="629.9" r="2.3"/><circle cx="511.0" cy="626.9" r="2.3"/><circle cx="510.5" cy="623.8" r="2.3"/><circle cx="509.2" cy="621.1" r="2.3"/><circle cx="530.7" cy="628.8" r="2.4"/><circle cx="537.1" cy="631.9" r="2.4"/><circle cx="519.6" cy="628.3" r="2.4"/><circle cx="517.4" cy="635.2" r="2.4"/><circle cx="560.6" cy="628.8" r="2.4"/><circle cx="562.7" cy="625.8" r="2.4"/><circle cx="533.1" cy="643.7" r="2.4"/><circle cx="509.9" cy="621.8" r="2.4"/><circle cx="540.8" cy="633.2" r="2.4"/><circle cx="538.1" cy="633.7" r="2.4"/><circle cx="547.5" cy="630.5" r="2.4"/><circle cx="529.2" cy="635.7" r="2.4"/><circle cx="528.9" cy="644.7" r="2.4"/><circle cx="547.0" cy="633.9" r="2.4"/><circle cx="514.8" cy="630.1" r="2.4"/><circle cx="531.6" cy="634.9" r="2.4"/><circle cx="541.3" cy="642.9" r="2.4"/><circle cx="533.8" cy="636.5" r="2.4"/><circle cx="538.8" cy="641.3" r="2.4"/><circle cx="518.8" cy="628.7" r="2.4"/><circle cx="558.8" cy="631.3" r="2.4"/><circle cx="518.0" cy="628.0" r="2.4"/><circle cx="537.8" cy="633.4" r="2.4"/><circle cx="519.8" cy="625.2" r="2.4"/><circle cx="544.4" cy="635.9" r="2.4"/><circle cx="532.2" cy="640.6" r="2.4"/><circle cx="526.4" cy="638.1" r="2.4"/><circle cx="537.0" cy="634.7" r="2.4"/><circle cx="524.1" cy="637.0" r="2.4"/><circle cx="541.3" cy="631.0" r="2.4"/><circle cx="516.1" cy="624.6" r="2.4"/><circle cx="514.9" cy="624.9" r="2.4"/><circle cx="538.4" cy="641.5" r="2.4"/><circle cx="543.4" cy="641.1" r="2.4"/><circle cx="552.2" cy="628.8" r="2.4"/><circle cx="549.2" cy="629.6" r="2.4"/><circle cx="518.7" cy="627.4" r="2.4"/><circle cx="541.7" cy="629.5" r="2.4"/><circle cx="534.4" cy="630.4" r="2.4"/><circle cx="533.8" cy="636.4" r="2.4"/><circle cx="526.8" cy="643.4" r="2.4"/><circle cx="554.7" cy="628.3" r="2.4"/><circle cx="536.9" cy="644.7" r="2.4"/><circle cx="522.8" cy="630.5" r="2.4"/><circle cx="549.3" cy="626.2" r="2.4"/><circle cx="526.5" cy="642.8" r="2.4"/><circle cx="536.3" cy="640.7" r="2.4"/><circle cx="539.0" cy="630.4" r="2.4"/><circle cx="528.9" cy="626.8" r="2.4"/><circle cx="519.9" cy="627.8" r="2.4"/><circle cx="546.3" cy="629.3" r="2.4"/><circle cx="518.0" cy="638.5" r="2.4"/><circle cx="514.5" cy="627.4" r="2.4"/><circle cx="534.0" cy="641.8" r="2.4"/><circle cx="529.0" cy="639.0" r="2.4"/><circle cx="530.3" cy="644.9" r="2.4"/><circle cx="548.7" cy="627.2" r="2.4"/><circle cx="529.8" cy="626.9" r="2.4"/><circle cx="557.9" cy="623.7" r="2.4"/><circle cx="537.9" cy="634.4" r="2.4"/></g><path d="M523 632 l3 -2 l4 1.5 l4 -3 l4 3 l4 -2.5 l5 1 l4 2 l-4 3 l-5 -1 l-4 2.5 l-5 0.5 l-3 -3 l-6 1.5 Z" fill="#151515"/></svg>
<div class="tab on" style="left:1041px;width:55px;letter-spacing:-0.406px;">Meshes</div>
<div class="tab" style="left:1096px;width:44px;letter-spacing:-0.583px;">Bones</div>
<div class="tab" style="left:1142px;width:62px;letter-spacing:-0.003px;">Partitions</div>
<div class="tab" style="left:1206px;width:46px;letter-spacing:-0.178px;">Colors</div>
<div class="tab" style="left:1254px;width:44px;letter-spacing:-0.066px;">Lights</div>
<div class="abs" style="left:1043px;top:97px;width:875px;height:529px;background:#404040;border:1px solid #828c9c;border-right:0"></div>
<div class="abs" style="left:1041px;top:628px;width:877px;height:4px;background:#f0f0f0"></div>
<svg style="left:1053px;top:105px" width="9" height="9" viewBox="1053 105 9 9" ><rect x="1053" y="105" width="9" height="9" fill="#f4f4f4"/><rect x="1053.5" y="105.5" width="8" height="8" fill="none" stroke="#b0b0b0" stroke-width="1"/><rect x="1055" y="109" width="5" height="1" fill="#3050a0"/></svg>
<div class="t" style="left:1069px;top:100px;color:#fff;letter-spacing:-0.134px;">MiniBikini 1 Top BHUNP-3BBB</div>
<div class="abs" style="left:1102px;top:117px;width:11px;height:18px;background:#f0f0f0"></div>
<svg style="left:1086px;top:118px" width="16" height="16" viewBox="1086 118 16 16" ><path d="M1086.6 127.2 C1089 119.6 1098.6 119.6 1101 127.2" fill="none" stroke="#fff" stroke-width="2.1" stroke-linecap="round"/><circle cx="1093.8" cy="126.8" r="3.2" fill="none" stroke="#fff" stroke-width="2.1"/></svg>
<div class="t" style="left:1104px;top:118px;color:#000;letter-spacing:0px;">B</div>
<svg style="left:1086px;top:136px" width="16" height="16" viewBox="1086 136 16 16" ><path d="M1086.6 145.2 C1089 137.6 1098.6 137.6 1101 145.2" fill="none" stroke="#fff" stroke-width="2.1" stroke-linecap="round"/><circle cx="1093.8" cy="144.8" r="3.2" fill="none" stroke="#fff" stroke-width="2.1"/></svg>
<div class="t" style="left:1104px;top:136px;color:#fff;letter-spacing:-0.608px;">BaseShapeCanal</div>
<svg style="left:1086px;top:154px" width="16" height="16" viewBox="1086 154 16 16" ><path d="M1086.6 163.2 C1089 155.6 1098.6 155.6 1101 163.2" fill="none" stroke="#fff" stroke-width="2.1" stroke-linecap="round"/><circle cx="1093.8" cy="162.8" r="3.2" fill="none" stroke="#fff" stroke-width="2.1"/></svg>
<div class="t" style="left:1104px;top:154px;color:#fff;letter-spacing:-0.576px;">BaseShapeAnus</div>
<svg style="left:1086px;top:172px" width="16" height="16" viewBox="1086 172 16 16" ><path d="M1086.6 181.2 C1089 173.6 1098.6 173.6 1101 181.2" fill="none" stroke="#fff" stroke-width="2.1" stroke-linecap="round"/><circle cx="1093.8" cy="180.8" r="3.2" fill="none" stroke="#fff" stroke-width="2.1"/></svg>
<div class="t" style="left:1104px;top:172px;color:#fff;letter-spacing:-0.488px;">BaseShapeVagina</div>
<svg style="left:1086px;top:190px" width="16" height="16" viewBox="1086 190 16 16" ><path d="M1086.6 199.2 C1089 191.6 1098.6 191.6 1101 199.2" fill="none" stroke="#fff" stroke-width="2.1" stroke-linecap="round"/><circle cx="1093.8" cy="198.8" r="3.2" fill="none" stroke="#fff" stroke-width="2.1"/></svg>
<div class="t" style="left:1104px;top:190px;color:#00ff00;letter-spacing:-0.625px;font-weight:bold;">BaseShape</div>
<div class="abs" style="left:1041px;top:632px;width:877px;height:31px;background:#707070"></div>
<div class="cb" style="left:1048px;top:640px"></div><svg style="left:1048px;top:640px" width="13" height="13" viewBox="1048 640 13 13" ><path d="M1050 646.2 L1053 649.4 L1058.9 643.1" fill="none" stroke="#2a2a2a" stroke-width="1.25"/></svg>
<div class="t" style="left:1064px;top:639px;color:#fff;letter-spacing:-0.256px;">De-/Select Sliders</div>
<div class="abs" style="left:1167px;top:634px;width:750px;height:23px;background:#fff"></div>
<svg style="left:1167px;top:634px" width="751" height="23" viewBox="1167 634 751 23" ><circle cx="1178.4" cy="643.2" r="4.6" fill="none" stroke="#505050" stroke-width="1.8"/><path d="M1181.8 646.8 L1186 651.2" stroke="#505050" stroke-width="2.2" stroke-linecap="round"/><circle cx="1903.6" cy="645.3" r="7.4" fill="#9a9a9a"/><path d="M1900.3 642 L1906.9 648.6 M1906.9 642 L1900.3 648.6" stroke="#fff" stroke-width="1.4"/></svg>
<div class="t" style="left:1193px;top:637px;color:#333;letter-spacing:-0.241px;">Slider Filter</div>
<div class="abs" style="left:1043px;top:663px;width:875px;height:30px;background:#f0f0f0"></div>
<svg style="left:1046px;top:667px" width="20" height="20" viewBox="1046 667 20 20" ><circle cx="1056.3" cy="677.6" r="9" fill="#fcfcfc" stroke="#9a9a9a" stroke-width="1"/><path d="M1052.2 675.8 L1056.3 679.9 L1060.4 675.8" fill="none" stroke="#7a7a7a" stroke-width="1.2"/></svg>
<div class="t" style="left:1068px;top:670px;letter-spacing:-0.543px;">Masks</div>
<div class="abs" style="left:1041px;top:693px;width:862px;height:324px;background:#404040"></div>
<div class="abs" style="left:1041px;top:693px;width:862px;height:2px;background:#6a6a6a"></div>
<div class="abs" style="left:1903px;top:693px;width:15px;height:324px;background:#f0f0f0"></div>
<div class="abs" style="left:1904px;top:712px;width:14px;height:17px;background:#cdcdcd"></div>
<svg style="left:1903px;top:693px" width="15" height="324" viewBox="1903 693 15 324" ><path d="M1906.9 706.4 L1910.5 702.8 L1914.1 706.4" fill="none" stroke="#505050" stroke-width="1.6"/><path d="M1906.9 1006.8 L1910.5 1010.4 L1914.1 1006.8" fill="none" stroke="#505050" stroke-width="1.6"/></svg>
<div class="row" style="top:696px"></div>
<div class="eb" style="top:698px"></div><svg style="left:1044px;top:698px" width="20" height="20" viewBox="1044 698 20 20" ><g transform="translate(1053.8 708.1) scale(1.0) rotate(36)"><rect x="-2.7" y="-8.8" width="5.4" height="2.2" fill="#2a2222"/><rect x="-2.7" y="-6" width="5.4" height="9.4" fill="#2a2222"/><path d="M-2.7 3.4 H2.7 L2.2 4.2 H-2.2 Z" fill="#2a2222"/><path d="M-1.3 6.6 H1.3 L0 9.3 Z" fill="#2a2222"/></g></svg>
<div class="cb" style="left:1070px;top:702px"></div><svg style="left:1070px;top:702px" width="13" height="13" viewBox="1070 702 13 13" ><path d="M1072 708.2 L1075 711.4 L1080.9 705.1" fill="none" stroke="#2a2a2a" stroke-width="1.25"/></svg>
<div class="t" style="left:1090px;top:700px;color:#fff;letter-spacing:-0.715px;">Breasts</div>
<div class="trk" style="left:1145px;top:707px;width:699px"></div>
<svg style="left:1140px;top:700px" width="11" height="17" viewBox="1140 700 11 17" ><path d="M1140 700 H1151 V714 L1148 717 H1143 L1140 714 Z" fill="#0078d7"/></svg>
<div class="val" style="top:699px;letter-spacing:-0.944px">0%</div>
<div class="row" style="top:723px"></div>
<div class="eb" style="top:725px"></div><svg style="left:1044px;top:725px" width="20" height="20" viewBox="1044 725 20 20" ><g transform="translate(1053.8 735.1) scale(1.0) rotate(36)"><rect x="-2.7" y="-8.8" width="5.4" height="2.2" fill="#2a2222"/><rect x="-2.7" y="-6" width="5.4" height="9.4" fill="#2a2222"/><path d="M-2.7 3.4 H2.7 L2.2 4.2 H-2.2 Z" fill="#2a2222"/><path d="M-1.3 6.6 H1.3 L0 9.3 Z" fill="#2a2222"/></g></svg>
<div class="cb" style="left:1070px;top:729px"></div><svg style="left:1070px;top:729px" width="13" height="13" viewBox="1070 729 13 13" ><path d="M1072 735.2 L1075 738.4 L1080.9 732.1" fill="none" stroke="#2a2a2a" stroke-width="1.25"/></svg>
<div class="t" style="left:1090px;top:727px;color:#fff;letter-spacing:-0.463px;">BreastsSmall</div>
<div class="trk" style="left:1174px;top:734px;width:670px"></div>
<svg style="left:1169px;top:727px" width="11" height="17" viewBox="1169 727 11 17" ><path d="M1169 727 H1180 V741 L1177 744 H1172 L1169 741 Z" fill="#0078d7"/></svg>
<div class="val" style="top:726px;letter-spacing:-0.944px">0%</div>
<div class="row" style="top:750px"></div>
<div class="eb" style="top:752px"></div><svg style="left:1044px;top:752px" width="20" height="20" viewBox="1044 752 20 20" ><g transform="translate(1053.8 762.1) scale(1.0) rotate(36)"><rect x="-2.7" y="-8.8" width="5.4" height="2.2" fill="#2a2222"/><rect x="-2.7" y="-6" width="5.4" height="9.4" fill="#2a2222"/><path d="M-2.7 3.4 H2.7 L2.2 4.2 H-2.2 Z" fill="#2a2222"/><path d="M-1.3 6.6 H1.3 L0 9.3 Z" fill="#2a2222"/></g></svg>
<div class="cb" style="left:1070px;top:756px"></div><svg style="left:1070px;top:756px" width="13" height="13" viewBox="1070 756 13 13" ><path d="M1072 762.2 L1075 765.4 L1080.9 759.1" fill="none" stroke="#2a2a2a" stroke-width="1.25"/></svg>
<div class="t" style="left:1090px;top:754px;color:#fff;letter-spacing:-0.745px;">BreastsSH</div>
<div class="trk" style="left:1160px;top:761px;width:684px"></div>
<svg style="left:1155px;top:754px" width="11" height="17" viewBox="1155 754 11 17" ><path d="M1155 754 H1166 V768 L1163 771 H1158 L1155 768 Z" fill="#0078d7"/></svg>
<div class="val" style="top:753px;letter-spacing:-0.944px">0%</div>
<div class="row" style="top:777px"></div>
<div class="eb" style="top:779px"></div><svg style="left:1044px;top:779px" width="20" height="20" viewBox="1044 779 20 20" ><g transform="translate(1053.8 789.1) scale(1.0) rotate(36)"><rect x="-2.7" y="-8.8" width="5.4" height="2.2" fill="#2a2222"/><rect x="-2.7" y="-6" width="5.4" height="9.4" fill="#2a2222"/><path d="M-2.7 3.4 H2.7 L2.2 4.2 H-2.2 Z" fill="#2a2222"/><path d="M-1.3 6.6 H1.3 L0 9.3 Z" fill="#2a2222"/></g></svg>
<div class="cb" style="left:1070px;top:783px"></div><svg style="left:1070px;top:783px" width="13" height="13" viewBox="1070 783 13 13" ><path d="M1072 789.2 L1075 792.4 L1080.9 786.1" fill="none" stroke="#2a2a2a" stroke-width="1.25"/></svg>
<div class="t" style="left:1090px;top:781px;color:#fff;letter-spacing:-0.884px;">BreastsSSH</div>
<div class="trk" style="left:1166px;top:788px;width:678px"></div>
<svg style="left:1161px;top:781px" width="11" height="17" viewBox="1161 781 11 17" ><path d="M1161 781 H1172 V795 L1169 798 H1164 L1161 795 Z" fill="#0078d7"/></svg>
<div class="val" style="top:780px;letter-spacing:-0.944px">0%</div>
<div class="row" style="top:804px"></div>
<div class="eb" style="top:806px"></div><svg style="left:1044px;top:806px" width="20" height="20" viewBox="1044 806 20 20" ><g transform="translate(1053.8 816.1) scale(1.0) rotate(36)"><rect x="-2.7" y="-8.8" width="5.4" height="2.2" fill="#2a2222"/><rect x="-2.7" y="-6" width="5.4" height="9.4" fill="#2a2222"/><path d="M-2.7 3.4 H2.7 L2.2 4.2 H-2.2 Z" fill="#2a2222"/><path d="M-1.3 6.6 H1.3 L0 9.3 Z" fill="#2a2222"/></g></svg>
<div class="cb" style="left:1070px;top:810px"></div><svg style="left:1070px;top:810px" width="13" height="13" viewBox="1070 810 13 13" ><path d="M1072 816.2 L1075 819.4 L1080.9 813.1" fill="none" stroke="#2a2a2a" stroke-width="1.25"/></svg>
<div class="t" style="left:1090px;top:808px;color:#fff;letter-spacing:-0.537px;">BreastsFantasy</div>
<div class="trk" style="left:1185px;top:815px;width:659px"></div>
<svg style="left:1180px;top:808px" width="11" height="17" viewBox="1180 808 11 17" ><path d="M1180 808 H1191 V822 L1188 825 H1183 L1180 822 Z" fill="#0078d7"/></svg>
<div class="val" style="top:807px;letter-spacing:-0.944px">0%</div>
<div class="row" style="top:831px"></div>
<div class="eb" style="top:833px"></div><svg style="left:1044px;top:833px" width="20" height="20" viewBox="1044 833 20 20" ><g transform="translate(1053.8 843.1) scale(1.0) rotate(36)"><rect x="-2.7" y="-8.8" width="5.4" height="2.2" fill="#2a2222"/><rect x="-2.7" y="-6" width="5.4" height="9.4" fill="#2a2222"/><path d="M-2.7 3.4 H2.7 L2.2 4.2 H-2.2 Z" fill="#2a2222"/><path d="M-1.3 6.6 H1.3 L0 9.3 Z" fill="#2a2222"/></g></svg>
<div class="cb" style="left:1070px;top:837px"></div><svg style="left:1070px;top:837px" width="13" height="13" viewBox="1070 837 13 13" ><path d="M1072 843.2 L1075 846.4 L1080.9 840.1" fill="none" stroke="#2a2a2a" stroke-width="1.25"/></svg>
<div class="t" style="left:1090px;top:835px;color:#fff;letter-spacing:0.038px;">DoubleMelon</div>
<div class="trk" style="left:1180px;top:842px;width:664px"></div>
<svg style="left:1175px;top:835px" width="11" height="17" viewBox="1175 835 11 17" ><path d="M1175 835 H1186 V849 L1183 852 H1178 L1175 849 Z" fill="#0078d7"/></svg>
<div class="val" style="top:834px;letter-spacing:-0.944px">0%</div>
<div class="row" style="top:858px"></div>
<div class="eb" style="top:860px"></div><svg style="left:1044px;top:860px" width="20" height="20" viewBox="1044 860 20 20" ><g transform="translate(1053.8 870.1) scale(1.0) rotate(36)"><rect x="-2.7" y="-8.8" width="5.4" height="2.2" fill="#2a2222"/><rect x="-2.7" y="-6" width="5.4" height="9.4" fill="#2a2222"/><path d="M-2.7 3.4 H2.7 L2.2 4.2 H-2.2 Z" fill="#2a2222"/><path d="M-1.3 6.6 H1.3 L0 9.3 Z" fill="#2a2222"/></g></svg>
<div class="cb" style="left:1070px;top:864px"></div><svg style="left:1070px;top:864px" width="13" height="13" viewBox="1070 864 13 13" ><path d="M1072 870.2 L1075 873.4 L1080.9 867.1" fill="none" stroke="#2a2a2a" stroke-width="1.25"/></svg>
<div class="t" style="left:1090px;top:862px;color:#fff;letter-spacing:-0.43px;">BreastCleavage</div>
<div class="trk" style="left:1188px;top:869px;width:656px"></div>
<svg style="left:1183px;top:862px" width="11" height="17" viewBox="1183 862 11 17" ><path d="M1183 862 H1194 V876 L1191 879 H1186 L1183 876 Z" fill="#0078d7"/></svg>
<div class="val" style="top:861px;letter-spacing:-0.944px">0%</div>
<div class="row" style="top:885px"></div>
<div class="eb" style="top:887px"></div><svg style="left:1044px;top:887px" width="20" height="20" viewBox="1044 887 20 20" ><g transform="translate(1053.8 897.1) scale(1.0) rotate(36)"><rect x="-2.7" y="-8.8" width="5.4" height="2.2" fill="#2a2222"/><rect x="-2.7" y="-6" width="5.4" height="9.4" fill="#2a2222"/><path d="M-2.7 3.4 H2.7 L2.2 4.2 H-2.2 Z" fill="#2a2222"/><path d="M-1.3 6.6 H1.3 L0 9.3 Z" fill="#2a2222"/></g></svg>
<div class="cb" style="left:1070px;top:891px"></div><svg style="left:1070px;top:891px" width="13" height="13" viewBox="1070 891 13 13" ><path d="M1072 897.2 L1075 900.4 L1080.9 894.1" fill="none" stroke="#2a2a2a" stroke-width="1.25"/></svg>
<div class="t" style="left:1090px;top:889px;color:#fff;letter-spacing:-0.504px;">BreastFlatness</div>
<div class="trk" style="left:1182px;top:896px;width:662px"></div>
<svg style="left:1177px;top:889px" width="11" height="17" viewBox="1177 889 11 17" ><path d="M1177 889 H1188 V903 L1185 906 H1180 L1177 903 Z" fill="#0078d7"/></svg>
<div class="val" style="top:888px;letter-spacing:-0.944px">0%</div>
<div class="row" style="top:912px"></div>
<div class="eb" style="top:914px"></div><svg style="left:1044px;top:914px" width="20" height="20" viewBox="1044 914 20 20" ><g transform="translate(1053.8 924.1) scale(1.0) rotate(36)"><rect x="-2.7" y="-8.8" width="5.4" height="2.2" fill="#2a2222"/><rect x="-2.7" y="-6" width="5.4" height="9.4" fill="#2a2222"/><path d="M-2.7 3.4 H2.7 L2.2 4.2 H-2.2 Z" fill="#2a2222"/><path d="M-1.3 6.6 H1.3 L0 9.3 Z" fill="#2a2222"/></g></svg>
<div class="cb" style="left:1070px;top:918px"></div><svg style="left:1070px;top:918px" width="13" height="13" viewBox="1070 918 13 13" ><path d="M1072 924.2 L1075 927.4 L1080.9 921.1" fill="none" stroke="#2a2a2a" stroke-width="1.25"/></svg>
<div class="t" style="left:1090px;top:916px;color:#fff;letter-spacing:-0.391px;">BreastGravity</div>
<div class="trk" style="left:1177px;top:923px;width:667px"></div>
<svg style="left:1172px;top:916px" width="11" height="17" viewBox="1172 916 11 17" ><path d="M1172 916 H1183 V930 L1180 933 H1175 L1172 930 Z" fill="#0078d7"/></svg>
<div class="val" style="top:915px;letter-spacing:-0.944px">0%</div>
<div class="row" style="top:939px"></div>
<div class="eb" style="top:941px"></div><svg style="left:1044px;top:941px" width="20" height="20" viewBox="1044 941 20 20" ><g transform="translate(1053.8 951.1) scale(1.0) rotate(36)"><rect x="-2.7" y="-8.8" width="5.4" height="2.2" fill="#2a2222"/><rect x="-2.7" y="-6" width="5.4" height="9.4" fill="#2a2222"/><path d="M-2.7 3.4 H2.7 L2.2 4.2 H-2.2 Z" fill="#2a2222"/><path d="M-1.3 6.6 H1.3 L0 9.3 Z" fill="#2a2222"/></g></svg>
<div class="cb" style="left:1070px;top:945px"></div><svg style="left:1070px;top:945px" width="13" height="13" viewBox="1070 945 13 13" ><path d="M1072 951.2 L1075 954.4 L1080.9 948.1" fill="none" stroke="#2a2a2a" stroke-width="1.25"/></svg>
<div class="t" style="left:1090px;top:943px;color:#fff;letter-spacing:-0.481px;">PushUp</div>
<div class="trk" style="left:1149px;top:950px;width:695px"></div>
<svg style="left:1144px;top:943px" width="11" height="17" viewBox="1144 943 11 17" ><path d="M1144 943 H1155 V957 L1152 960 H1147 L1144 957 Z" fill="#0078d7"/></svg>
<div class="val" style="top:942px;letter-spacing:-0.944px">0%</div>
<div class="row" style="top:966px"></div>
<div class="eb" style="top:968px"></div><svg style="left:1044px;top:968px" width="20" height="20" viewBox="1044 968 20 20" ><g transform="translate(1053.8 978.1) scale(1.0) rotate(36)"><rect x="-2.7" y="-8.8" width="5.4" height="2.2" fill="#2a2222"/><rect x="-2.7" y="-6" width="5.4" height="9.4" fill="#2a2222"/><path d="M-2.7 3.4 H2.7 L2.2 4.2 H-2.2 Z" fill="#2a2222"/><path d="M-1.3 6.6 H1.3 L0 9.3 Z" fill="#2a2222"/></g></svg>
<div class="cb" style="left:1070px;top:972px"></div><svg style="left:1070px;top:972px" width="13" height="13" viewBox="1070 972 13 13" ><path d="M1072 978.2 L1075 981.4 L1080.9 975.1" fill="none" stroke="#2a2a2a" stroke-width="1.25"/></svg>
<div class="t" style="left:1090px;top:970px;color:#fff;letter-spacing:-0.17px;">BreastHeight</div>
<div class="trk" style="left:1176px;top:977px;width:668px"></div>
<svg style="left:1171px;top:970px" width="11" height="17" viewBox="1171 970 11 17" ><path d="M1171 970 H1182 V984 L1179 987 H1174 L1171 984 Z" fill="#0078d7"/></svg>
<div class="val" style="top:969px;letter-spacing:-0.944px">0%</div>
<div class="row" style="top:993px"></div>
<div class="eb" style="top:995px"></div><svg style="left:1044px;top:995px" width="20" height="20" viewBox="1044 995 20 20" ><g transform="translate(1053.8 1005.1) scale(1.0) rotate(36)"><rect x="-2.7" y="-8.8" width="5.4" height="2.2" fill="#2a2222"/><rect x="-2.7" y="-6" width="5.4" height="9.4" fill="#2a2222"/><path d="M-2.7 3.4 H2.7 L2.2 4.2 H-2.2 Z" fill="#2a2222"/><path d="M-1.3 6.6 H1.3 L0 9.3 Z" fill="#2a2222"/></g></svg>
<div class="cb" style="left:1070px;top:999px"></div><svg style="left:1070px;top:999px" width="13" height="13" viewBox="1070 999 13 13" ><path d="M1072 1005.2 L1075 1008.4 L1080.9 1002.1" fill="none" stroke="#2a2a2a" stroke-width="1.25"/></svg>
<div class="t" style="left:1090px;top:997px;color:#fff;letter-spacing:-0.505px;">BreastPerkiness</div>
<div class="trk" style="left:1189px;top:1004px;width:655px"></div>
<svg style="left:1184px;top:997px" width="11" height="17" viewBox="1184 997 11 17" ><path d="M1184 997 H1195 V1011 L1192 1014 H1187 L1184 1011 Z" fill="#0078d7"/></svg>
<div class="val" style="top:996px;letter-spacing:-0.944px">0%</div>
<div id="status" class="abs"></div>
<div class="t" style="left:2px;top:1022px;letter-spacing:-0.606px;">Ready!</div>
<div class="abs" style="left:1381px;top:1019px;width:1px;height:19px;background:#d0d0d0"></div>
<div class="abs" style="left:1791px;top:1019px;width:1px;height:19px;background:#d0d0d0"></div>
</body></html>
